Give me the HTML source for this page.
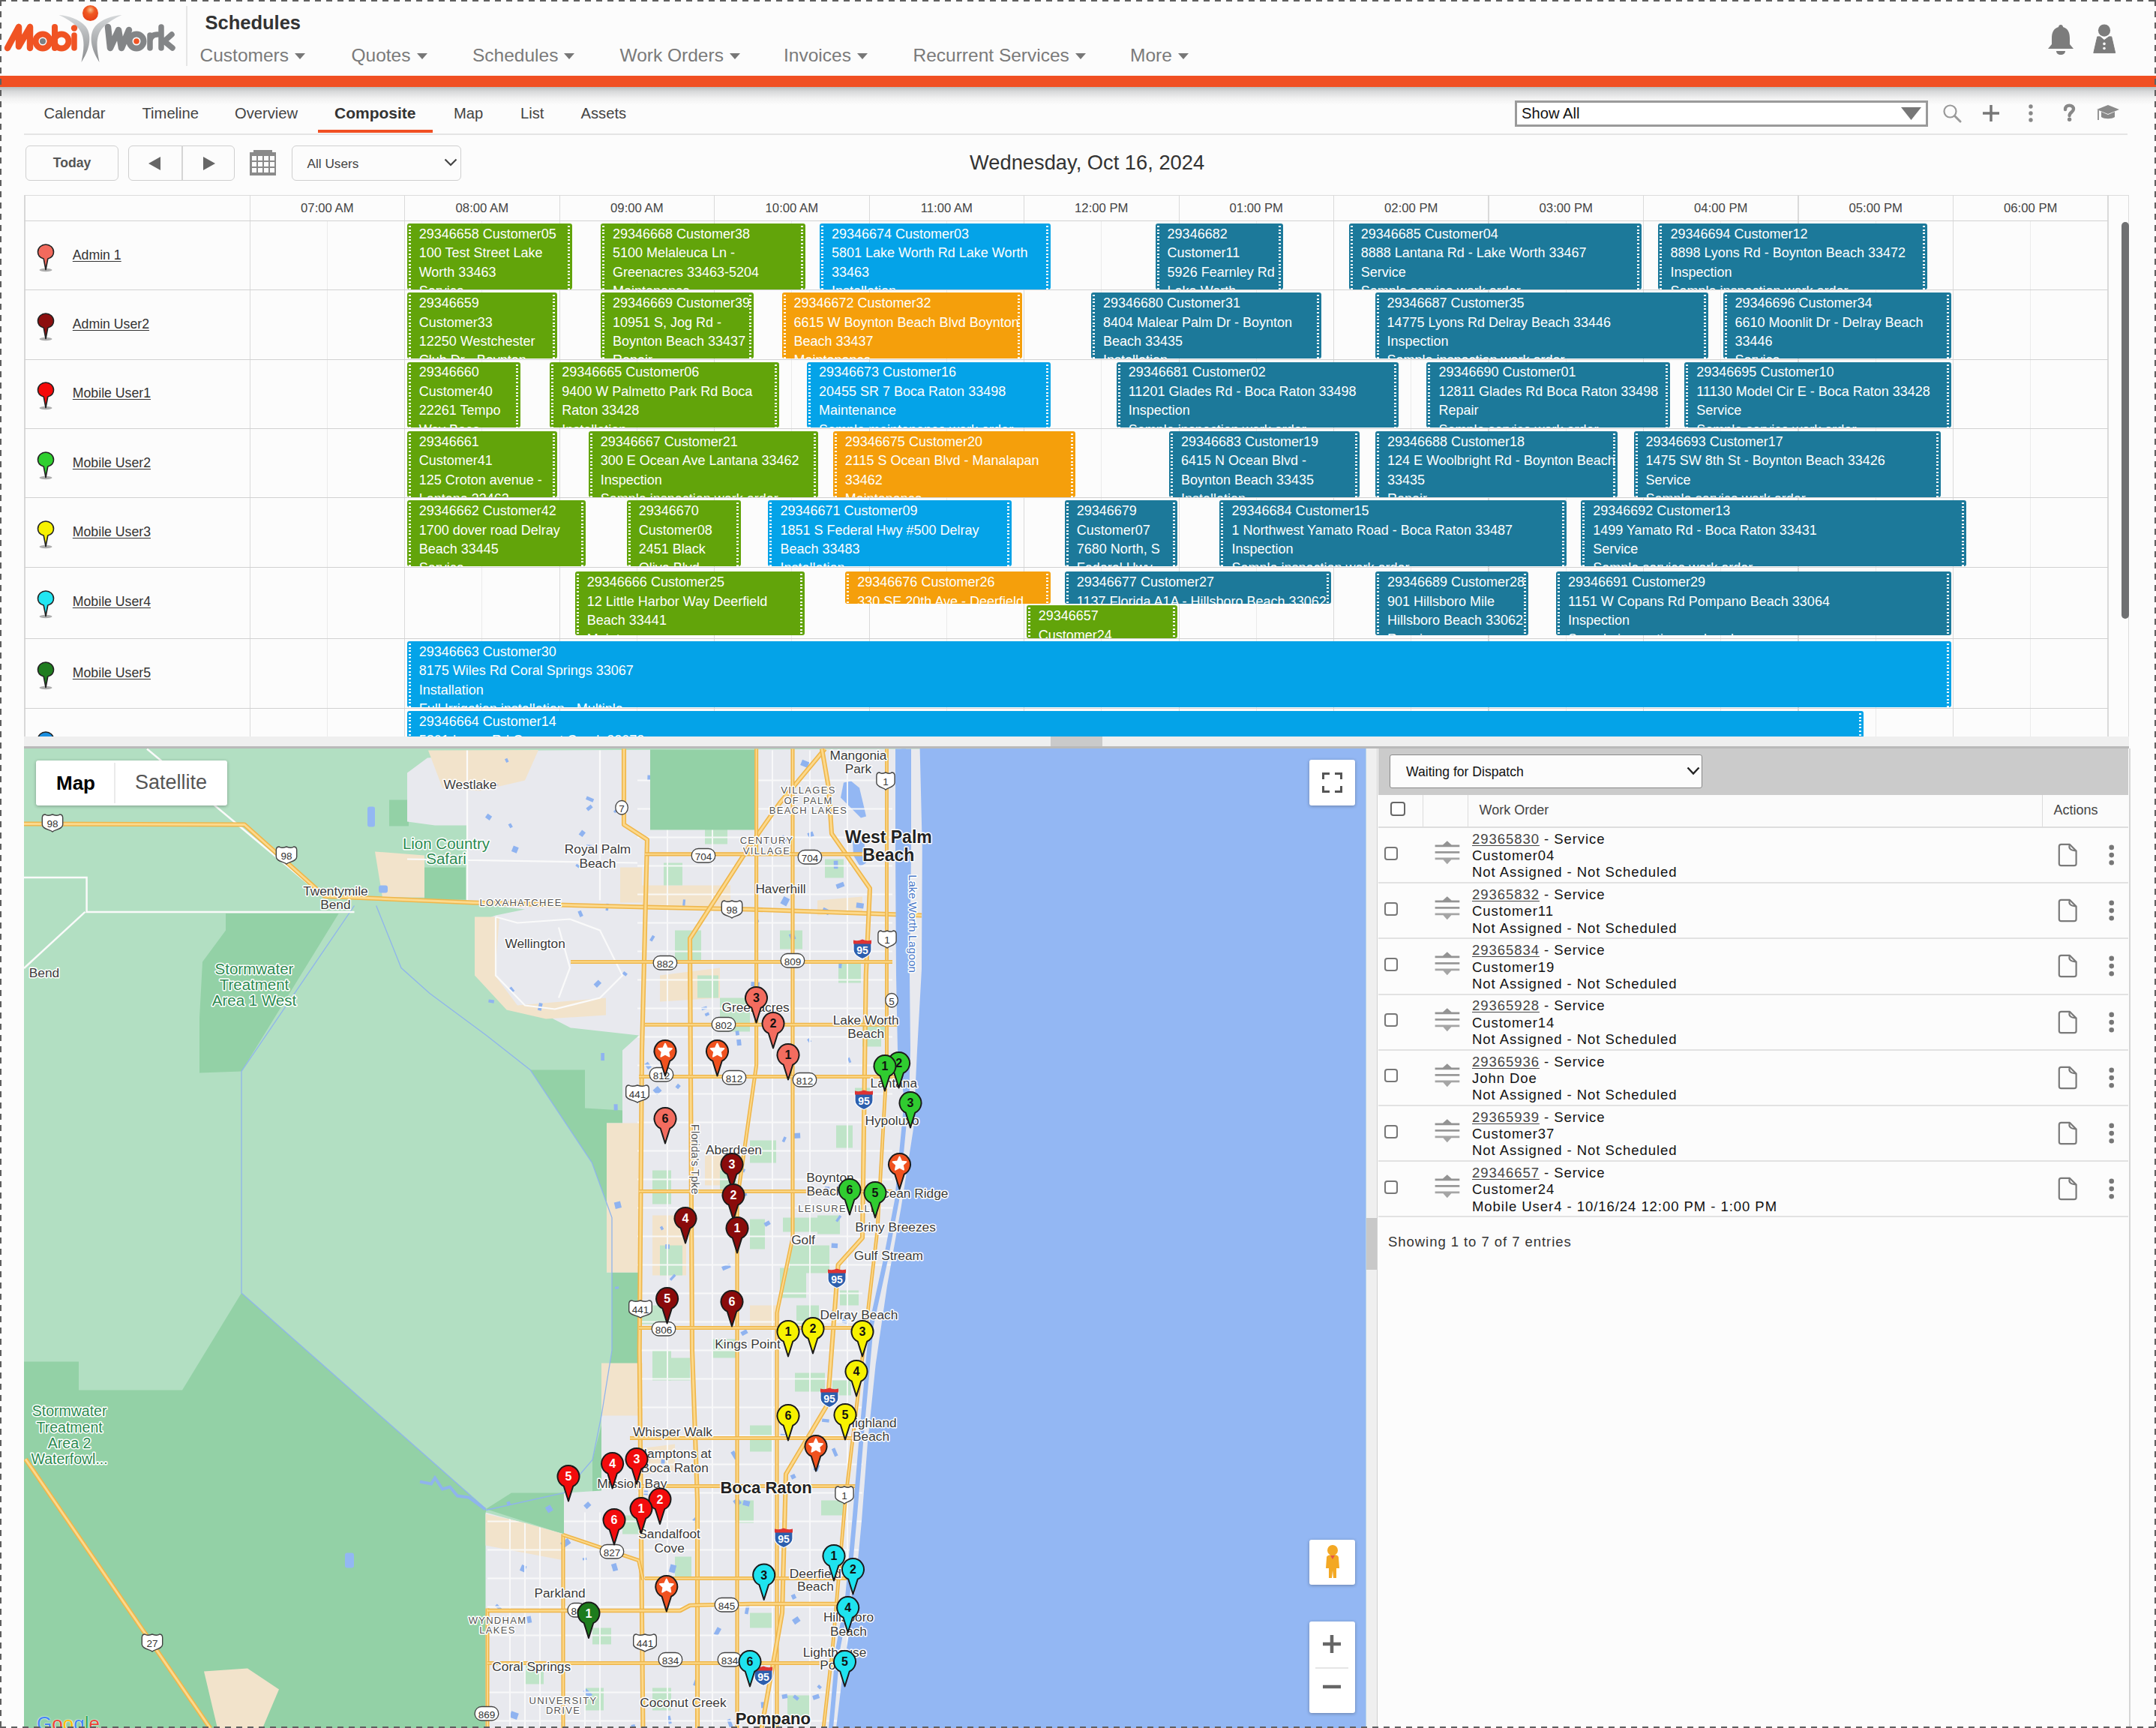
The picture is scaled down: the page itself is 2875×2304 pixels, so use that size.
<!DOCTYPE html><html><head><meta charset="utf-8"><style>
html,body{margin:0;padding:0;}
body{width:2875px;height:2304px;position:relative;overflow:hidden;background:#fcfcfc;font-family:"Liberation Sans", sans-serif;}
.t{position:absolute;white-space:nowrap;}
.b{position:absolute;box-sizing:border-box;}
.ev{position:absolute;box-sizing:border-box;border-radius:3px;overflow:hidden;color:#fff;font-size:18px;line-height:25.4px;padding:1.8px 0 0 16px;white-space:nowrap;}
.ev:before,.ev:after{content:"";position:absolute;top:3px;bottom:0;width:3px;background:repeating-linear-gradient(to bottom,#fff 0,#fff 2px,transparent 2px,transparent 4.6px);opacity:.95}
.ev:before{left:2px}.ev:after{right:3px}
</style></head><body>

<svg style="position:absolute;left:0;top:0" width="250" height="95" viewBox="0 0 250 95">
<defs><linearGradient id="lg1" x1="0" y1="0" x2="0" y2="1"><stop offset="0" stop-color="#d5d8da"/><stop offset="1" stop-color="#8a8c8e"/></linearGradient>
<radialGradient id="ball" cx="0.5" cy="0.3" r="0.6"><stop offset="0" stop-color="#f8c08a"/><stop offset="0.45" stop-color="#f05a22"/><stop offset="1" stop-color="#e8451a"/></radialGradient></defs>
<path d="M78.5,20 C92,21 106,26 114,35 C119,41 120.5,50 118.5,60 C116.5,70 112,77 108.5,83 C110,75 111.5,68 111.5,60 C111.5,50 109,42 103,36 C96,29 88,24 78.5,20 Z" fill="url(#lg1)"/>
<path d="M162.5,20 C149,21 135,26 127,35 C122,41 120.5,50 122.5,60 C124.5,70 129,77 132.5,83 C131,75 129.5,68 129.5,60 C129.5,50 132,42 138,36 C145,29 153,24 162.5,20 Z" fill="url(#lg1)"/>
<circle cx="120.5" cy="17.5" r="10.5" fill="url(#ball)"/>
<path d="M10 64 L25 36 M25 36 L25 62 M25 62 L40 36 M40 36 L40 64" stroke="#f05323" stroke-width="8.5" stroke-linecap="round" stroke-linejoin="round" fill="none"/>
<circle cx="57" cy="55" r="9.5" fill="none" stroke="#f05323" stroke-width="8"/>
<circle cx="57" cy="55" r="4" fill="#7d7f82"/>
<path d="M73 36 L73 64" stroke="#f05323" stroke-width="8" stroke-linecap="round"/>
<circle cx="82" cy="55" r="9.5" fill="none" stroke="#f05323" stroke-width="8"/>
<path d="M99 47 L99 64" stroke="#f05323" stroke-width="7.5" stroke-linecap="round"/>
<circle cx="99" cy="37.5" r="4.2" fill="#f05323"/>
<path d="M144 36 L147 64 L158 40 L162 64 L172 40" stroke="#838587" stroke-width="8.5" stroke-linecap="round" stroke-linejoin="round" fill="none"/>
<circle cx="182" cy="55" r="9.5" fill="none" stroke="#838587" stroke-width="8"/>
<circle cx="182" cy="55" r="3.8" fill="#f05323"/>
<path d="M200 47 L200 64 M200 54 C201 48 205 46 210 46" stroke="#838587" stroke-width="7.5" stroke-linecap="round" fill="none"/>
<path d="M215 36 L215 64 M229 46 L219 55 L230 64" stroke="#838587" stroke-width="7.5" stroke-linecap="round" stroke-linejoin="round" fill="none"/>
</svg>
<div class="b" style="left:248.0px;top:8.0px;width:2.0px;height:80.0px;background:#e6e6e6"></div>
<div class="t " style="left:273.5px;top:17.9px;font-size:25.5px;line-height:25.5px;color:#333;font-weight:bold;">Schedules</div>
<div class="t " style="left:266.5px;top:61.8px;font-size:24.5px;line-height:24.5px;color:#7a7a7a;font-weight:normal;">Customers</div>
<svg style="position:absolute;left:392.9375px;top:71px" width="14" height="8"><path d="M0 0H14L7 8Z" fill="#777"/></svg>
<div class="t " style="left:468.5px;top:61.8px;font-size:24.5px;line-height:24.5px;color:#7a7a7a;font-weight:normal;">Quotes</div>
<svg style="position:absolute;left:555.5px;top:71px" width="14" height="8"><path d="M0 0H14L7 8Z" fill="#777"/></svg>
<div class="t " style="left:630.0px;top:61.8px;font-size:24.5px;line-height:24.5px;color:#7a7a7a;font-weight:normal;">Schedules</div>
<svg style="position:absolute;left:752.40625px;top:71px" width="14" height="8"><path d="M0 0H14L7 8Z" fill="#777"/></svg>
<div class="t " style="left:826.5px;top:61.8px;font-size:24.5px;line-height:24.5px;color:#7a7a7a;font-weight:normal;">Work Orders</div>
<svg style="position:absolute;left:972.90625px;top:71px" width="14" height="8"><path d="M0 0H14L7 8Z" fill="#777"/></svg>
<div class="t " style="left:1045.0px;top:61.8px;font-size:24.5px;line-height:24.5px;color:#7a7a7a;font-weight:normal;">Invoices</div>
<svg style="position:absolute;left:1142.875px;top:71px" width="14" height="8"><path d="M0 0H14L7 8Z" fill="#777"/></svg>
<div class="t " style="left:1217.5px;top:61.8px;font-size:24.5px;line-height:24.5px;color:#7a7a7a;font-weight:normal;">Recurrent Services</div>
<svg style="position:absolute;left:1433.8125px;top:71px" width="14" height="8"><path d="M0 0H14L7 8Z" fill="#777"/></svg>
<div class="t " style="left:1507.0px;top:61.8px;font-size:24.5px;line-height:24.5px;color:#7a7a7a;font-weight:normal;">More</div>
<svg style="position:absolute;left:1570.8125px;top:71px" width="14" height="8"><path d="M0 0H14L7 8Z" fill="#777"/></svg>
<svg style="position:absolute;left:2728px;top:31px" width="40" height="44" viewBox="0 0 40 44">
<path d="M20 2 C22 2 23 3.5 23 5 C30 7 32 13 32 20 L32 28 L37 34 L3 34 L8 28 L8 20 C8 13 10 7 17 5 C17 3.5 18 2 20 2Z" fill="#7c7c7c"/>
<path d="M14 37 H26 C26 40 23.5 42 20 42 C16.5 42 14 40 14 37Z" fill="#7c7c7c"/></svg>
<svg style="position:absolute;left:2788px;top:31px" width="38" height="44" viewBox="0 0 38 44">
<circle cx="18" cy="9.6" r="8.1" fill="#7c7c7c"/>
<polygon points="8.8,17.9 12.4,17.9 18,22.6 24.2,17.9 27.7,17.9 32.7,39.6 3.8,39.6" fill="#7c7c7c" stroke="#7c7c7c" stroke-width="1" stroke-linejoin="round"/>
<circle cx="18" cy="27.4" r="1.8" fill="#fcfcfc"/><circle cx="18" cy="33.5" r="1.8" fill="#fcfcfc"/></svg>
<div class="b" style="left:0.0px;top:100.5px;width:2875.0px;height:15.0px;background:#f04f23"></div>
<div class="b" style="left:0.0px;top:115.5px;width:2875.0px;height:24.5px;background:linear-gradient(to bottom,#b9bcbd 0%,#d8d9da 25%,#f2f2f2 65%,#fcfcfc 100%)"></div>
<div class="t " style="left:58.5px;top:140.7px;font-size:20.2px;line-height:20.2px;color:#444;font-weight:normal;">Calendar</div>
<div class="t " style="left:189.5px;top:140.7px;font-size:20.2px;line-height:20.2px;color:#444;font-weight:normal;">Timeline</div>
<div class="t " style="left:313.0px;top:140.7px;font-size:20.2px;line-height:20.2px;color:#444;font-weight:normal;">Overview</div>
<div class="t " style="left:446.0px;top:140.0px;font-size:21px;line-height:21px;color:#333;font-weight:bold;">Composite</div>
<div class="t " style="left:605.0px;top:140.7px;font-size:20.2px;line-height:20.2px;color:#444;font-weight:normal;">Map</div>
<div class="t " style="left:694.0px;top:140.7px;font-size:20.2px;line-height:20.2px;color:#444;font-weight:normal;">List</div>
<div class="t " style="left:774.5px;top:140.7px;font-size:20.2px;line-height:20.2px;color:#444;font-weight:normal;">Assets</div>
<div class="b" style="left:31.5px;top:178.3px;width:2805.5px;height:1.5px;background:#e4e4e4"></div>
<div class="b" style="left:424.0px;top:173.0px;width:152.5px;height:4.0px;background:#f04f23"></div>
<div class="b" style="left:2019.5px;top:133.5px;width:551.5px;height:35.0px;border:3px solid #9a9a9a;background:#fff"></div>
<div class="t " style="left:2029.0px;top:140.9px;font-size:20.2px;line-height:20.2px;color:#111;font-weight:normal;">Show All</div>
<svg style="position:absolute;left:2535px;top:143px" width="27" height="17"><path d="M0 0H27L13.5 17Z" fill="#777"/></svg>
<svg style="position:absolute;left:2590px;top:138px" width="240" height="26" viewBox="0 0 240 26">
<circle cx="10.5" cy="10.5" r="8" fill="none" stroke="#9a9a9a" stroke-width="2.2"/><path d="M16.5 16.5 L24 24" stroke="#9a9a9a" stroke-width="3" stroke-linecap="round"/>
<path d="M65 2 V24 M54 13 H76" stroke="#777" stroke-width="3.5"/>
<circle cx="118" cy="4" r="2.7" fill="#888"/><circle cx="118" cy="13" r="2.7" fill="#888"/><circle cx="118" cy="22" r="2.7" fill="#888"/>
<path d="M164 8 C164 4.2 166.3 2.6 169.4 2.6 C172.8 2.6 175 4.6 175 7.6 C175 11.2 169.6 11.8 169.6 16" fill="none" stroke="#888" stroke-width="4.4" stroke-linecap="round"/><circle cx="169.6" cy="21.2" r="2.7" fill="#888"/>
<path d="M206 8 L221 2 L236 8 L221 14Z" fill="#8a8a8a"/><path d="M212 11 V18 C216 21 226 21 230 18 V11 L221 15Z" fill="#8a8a8a"/><path d="M208 9 V22" stroke="#8a8a8a" stroke-width="1.8"/>
</svg>
<div class="b" style="left:34.0px;top:193.7px;width:123.5px;height:46.9px;border:1.5px solid #cfcfcf;border-radius:6px;background:#fcfcfc"></div>
<div class="t " style="left:70.8px;top:209.4px;font-size:17.6px;line-height:17.6px;color:#555;font-weight:bold;">Today</div>
<div class="b" style="left:171.4px;top:193.7px;width:142.1px;height:46.9px;border:1.5px solid #cfcfcf;border-radius:6px;background:#fcfcfc"></div>
<div class="b" style="left:242.0px;top:194.0px;width:1.5px;height:46.3px;background:#d5d5d5"></div>
<svg style="position:absolute;left:198px;top:209px" width="90" height="18"><path d="M0 9L16 0V18Z" fill="#666"/><path d="M73 0L89 9L73 18Z" fill="#666"/></svg>
<svg style="position:absolute;left:333px;top:200px" width="36" height="34" viewBox="0 0 36 34">
<rect x="0" y="3" width="35" height="31" fill="#8a8a8a"/>
<rect x="5" y="0" width="25" height="5" fill="#8a8a8a"/>
<rect x="3" y="8" width="6" height="6" fill="#fcfcfc"/><rect x="11" y="8" width="6" height="6" fill="#fcfcfc"/><rect x="19" y="8" width="6" height="6" fill="#fcfcfc"/><rect x="27" y="8" width="6" height="6" fill="#fcfcfc"/><rect x="3" y="16" width="6" height="6" fill="#fcfcfc"/><rect x="11" y="16" width="6" height="6" fill="#fcfcfc"/><rect x="19" y="16" width="6" height="6" fill="#fcfcfc"/><rect x="27" y="16" width="6" height="6" fill="#fcfcfc"/><rect x="3" y="24" width="6" height="6" fill="#fcfcfc"/><rect x="11" y="24" width="6" height="6" fill="#fcfcfc"/><rect x="19" y="24" width="6" height="6" fill="#fcfcfc"/><rect x="27" y="24" width="6" height="6" fill="#fcfcfc"/></svg>
<div class="b" style="left:388.7px;top:193.8px;width:226.3px;height:47.2px;border:1.5px solid #cfcfcf;border-radius:6px;background:#fcfcfc"></div>
<div class="t " style="left:409.5px;top:210.4px;font-size:17.2px;line-height:17.2px;color:#444;font-weight:normal;">All Users</div>
<svg style="position:absolute;left:592px;top:211px" width="18" height="11"><path d="M1.5 1.5L9 9L16.5 1.5" fill="none" stroke="#444" stroke-width="2.2"/></svg>
<div class="t " style="left:1293.0px;top:202.9px;font-size:27.3px;line-height:27.3px;color:#333;font-weight:normal;">Wednesday, Oct 16, 2024</div>
<div class="b" style="left:32.0px;top:260.3px;width:2807.0px;height:736.7px;border:1px solid #dcdcdc;border-bottom:none;background:#fcfcfc"></div>
<div class="b" style="left:435.8px;top:295.0px;width:1.0px;height:687.0px;background:#ebebeb"></div>
<div class="b" style="left:642.3px;top:295.0px;width:1.0px;height:687.0px;background:#ebebeb"></div>
<div class="b" style="left:848.8px;top:295.0px;width:1.0px;height:687.0px;background:#ebebeb"></div>
<div class="b" style="left:1055.3px;top:295.0px;width:1.0px;height:687.0px;background:#ebebeb"></div>
<div class="b" style="left:1261.8px;top:295.0px;width:1.0px;height:687.0px;background:#ebebeb"></div>
<div class="b" style="left:1468.3px;top:295.0px;width:1.0px;height:687.0px;background:#ebebeb"></div>
<div class="b" style="left:1674.8px;top:295.0px;width:1.0px;height:687.0px;background:#ebebeb"></div>
<div class="b" style="left:1881.3px;top:295.0px;width:1.0px;height:687.0px;background:#ebebeb"></div>
<div class="b" style="left:2087.8px;top:295.0px;width:1.0px;height:687.0px;background:#ebebeb"></div>
<div class="b" style="left:2294.3px;top:295.0px;width:1.0px;height:687.0px;background:#ebebeb"></div>
<div class="b" style="left:2500.8px;top:295.0px;width:1.0px;height:687.0px;background:#ebebeb"></div>
<div class="b" style="left:2707.3px;top:295.0px;width:1.0px;height:687.0px;background:#ebebeb"></div>
<div class="b" style="left:332.5px;top:260.3px;width:1.3px;height:721.7px;background:#dadada"></div>
<div class="b" style="left:539.0px;top:260.3px;width:1.3px;height:721.7px;background:#dadada"></div>
<div class="b" style="left:745.5px;top:260.3px;width:1.3px;height:721.7px;background:#dadada"></div>
<div class="b" style="left:952.0px;top:260.3px;width:1.3px;height:721.7px;background:#dadada"></div>
<div class="b" style="left:1158.5px;top:260.3px;width:1.3px;height:721.7px;background:#dadada"></div>
<div class="b" style="left:1365.0px;top:260.3px;width:1.3px;height:721.7px;background:#dadada"></div>
<div class="b" style="left:1571.5px;top:260.3px;width:1.3px;height:721.7px;background:#dadada"></div>
<div class="b" style="left:1777.9px;top:260.3px;width:1.3px;height:721.7px;background:#dadada"></div>
<div class="b" style="left:1984.4px;top:260.3px;width:1.3px;height:721.7px;background:#dadada"></div>
<div class="b" style="left:2190.9px;top:260.3px;width:1.3px;height:721.7px;background:#dadada"></div>
<div class="b" style="left:2397.4px;top:260.3px;width:1.3px;height:721.7px;background:#dadada"></div>
<div class="b" style="left:2603.9px;top:260.3px;width:1.3px;height:721.7px;background:#dadada"></div>
<div class="b" style="left:2810.4px;top:260.3px;width:1.3px;height:721.7px;background:#dadada"></div>
<div class="b" style="left:32.0px;top:260.3px;width:1.5px;height:721.7px;background:#d8d8d8"></div>
<div class="b" style="left:32.0px;top:294.0px;width:2779.0px;height:1.0px;background:#d2d2d2"></div>
<div class="b" style="left:32.0px;top:386.3px;width:2779.0px;height:1.0px;background:#d2d2d2"></div>
<div class="b" style="left:32.0px;top:478.5px;width:2779.0px;height:1.0px;background:#d2d2d2"></div>
<div class="b" style="left:32.0px;top:571.0px;width:2779.0px;height:1.0px;background:#d2d2d2"></div>
<div class="b" style="left:32.0px;top:663.4px;width:2779.0px;height:1.0px;background:#d2d2d2"></div>
<div class="b" style="left:32.0px;top:756.3px;width:2779.0px;height:1.0px;background:#d2d2d2"></div>
<div class="b" style="left:32.0px;top:851.0px;width:2779.0px;height:1.0px;background:#d2d2d2"></div>
<div class="b" style="left:32.0px;top:944.0px;width:2779.0px;height:1.0px;background:#d2d2d2"></div>
<div class="t " style="left:401.1px;top:270.4px;font-size:16.7px;line-height:16.7px;color:#444;font-weight:normal;">07:00 AM</div>
<div class="t " style="left:607.6px;top:270.4px;font-size:16.7px;line-height:16.7px;color:#444;font-weight:normal;">08:00 AM</div>
<div class="t " style="left:814.1px;top:270.4px;font-size:16.7px;line-height:16.7px;color:#444;font-weight:normal;">09:00 AM</div>
<div class="t " style="left:1020.6px;top:270.4px;font-size:16.7px;line-height:16.7px;color:#444;font-weight:normal;">10:00 AM</div>
<div class="t " style="left:1227.7px;top:270.4px;font-size:16.7px;line-height:16.7px;color:#444;font-weight:normal;">11:00 AM</div>
<div class="t " style="left:1433.1px;top:270.4px;font-size:16.7px;line-height:16.7px;color:#444;font-weight:normal;">12:00 PM</div>
<div class="t " style="left:1639.6px;top:270.4px;font-size:16.7px;line-height:16.7px;color:#444;font-weight:normal;">01:00 PM</div>
<div class="t " style="left:1846.1px;top:270.4px;font-size:16.7px;line-height:16.7px;color:#444;font-weight:normal;">02:00 PM</div>
<div class="t " style="left:2052.6px;top:270.4px;font-size:16.7px;line-height:16.7px;color:#444;font-weight:normal;">03:00 PM</div>
<div class="t " style="left:2259.1px;top:270.4px;font-size:16.7px;line-height:16.7px;color:#444;font-weight:normal;">04:00 PM</div>
<div class="t " style="left:2465.5px;top:270.4px;font-size:16.7px;line-height:16.7px;color:#444;font-weight:normal;">05:00 PM</div>
<div class="t " style="left:2672.0px;top:270.4px;font-size:16.7px;line-height:16.7px;color:#444;font-weight:normal;">06:00 PM</div>
<svg style="position:absolute;left:46.6px;top:322.7px" width="28" height="40" viewBox="0 0 28 40">
<ellipse cx="14" cy="37" rx="8.5" ry="2.2" fill="#9a9a9a" opacity=".8"/>
<path d="M14 36.5 L11.2 22 C5.5 20.5 3.5 16.5 3.5 13 C3.5 7 8.5 3 14 3 C19.5 3 24.5 7 24.5 13 C24.5 16.5 22.5 20.5 16.8 22 Z" fill="#f26a5d" stroke="#222" stroke-width="1.6" stroke-linejoin="round"/></svg>
<div class="t " style="left:96.8px;top:331.8px;font-size:17.7px;line-height:17.7px;color:#333;font-weight:normal;text-decoration:underline;text-underline-offset:2px;text-decoration-thickness:1.3px">Admin 1</div>
<svg style="position:absolute;left:46.6px;top:415.0px" width="28" height="40" viewBox="0 0 28 40">
<ellipse cx="14" cy="37" rx="8.5" ry="2.2" fill="#9a9a9a" opacity=".8"/>
<path d="M14 36.5 L11.2 22 C5.5 20.5 3.5 16.5 3.5 13 C3.5 7 8.5 3 14 3 C19.5 3 24.5 7 24.5 13 C24.5 16.5 22.5 20.5 16.8 22 Z" fill="#8c0f0f" stroke="#222" stroke-width="1.6" stroke-linejoin="round"/></svg>
<div class="t " style="left:96.8px;top:424.1px;font-size:17.7px;line-height:17.7px;color:#333;font-weight:normal;text-decoration:underline;text-underline-offset:2px;text-decoration-thickness:1.3px">Admin User2</div>
<svg style="position:absolute;left:46.6px;top:507.2px" width="28" height="40" viewBox="0 0 28 40">
<ellipse cx="14" cy="37" rx="8.5" ry="2.2" fill="#9a9a9a" opacity=".8"/>
<path d="M14 36.5 L11.2 22 C5.5 20.5 3.5 16.5 3.5 13 C3.5 7 8.5 3 14 3 C19.5 3 24.5 7 24.5 13 C24.5 16.5 22.5 20.5 16.8 22 Z" fill="#f50a0a" stroke="#222" stroke-width="1.6" stroke-linejoin="round"/></svg>
<div class="t " style="left:96.8px;top:516.3px;font-size:17.7px;line-height:17.7px;color:#333;font-weight:normal;text-decoration:underline;text-underline-offset:2px;text-decoration-thickness:1.3px">Mobile User1</div>
<svg style="position:absolute;left:46.6px;top:599.7px" width="28" height="40" viewBox="0 0 28 40">
<ellipse cx="14" cy="37" rx="8.5" ry="2.2" fill="#9a9a9a" opacity=".8"/>
<path d="M14 36.5 L11.2 22 C5.5 20.5 3.5 16.5 3.5 13 C3.5 7 8.5 3 14 3 C19.5 3 24.5 7 24.5 13 C24.5 16.5 22.5 20.5 16.8 22 Z" fill="#2fcf2f" stroke="#222" stroke-width="1.6" stroke-linejoin="round"/></svg>
<div class="t " style="left:96.8px;top:608.8px;font-size:17.7px;line-height:17.7px;color:#333;font-weight:normal;text-decoration:underline;text-underline-offset:2px;text-decoration-thickness:1.3px">Mobile User2</div>
<svg style="position:absolute;left:46.6px;top:692.1px" width="28" height="40" viewBox="0 0 28 40">
<ellipse cx="14" cy="37" rx="8.5" ry="2.2" fill="#9a9a9a" opacity=".8"/>
<path d="M14 36.5 L11.2 22 C5.5 20.5 3.5 16.5 3.5 13 C3.5 7 8.5 3 14 3 C19.5 3 24.5 7 24.5 13 C24.5 16.5 22.5 20.5 16.8 22 Z" fill="#f7f200" stroke="#222" stroke-width="1.6" stroke-linejoin="round"/></svg>
<div class="t " style="left:96.8px;top:701.2px;font-size:17.7px;line-height:17.7px;color:#333;font-weight:normal;text-decoration:underline;text-underline-offset:2px;text-decoration-thickness:1.3px">Mobile User3</div>
<svg style="position:absolute;left:46.6px;top:785.0px" width="28" height="40" viewBox="0 0 28 40">
<ellipse cx="14" cy="37" rx="8.5" ry="2.2" fill="#9a9a9a" opacity=".8"/>
<path d="M14 36.5 L11.2 22 C5.5 20.5 3.5 16.5 3.5 13 C3.5 7 8.5 3 14 3 C19.5 3 24.5 7 24.5 13 C24.5 16.5 22.5 20.5 16.8 22 Z" fill="#22e6f2" stroke="#222" stroke-width="1.6" stroke-linejoin="round"/></svg>
<div class="t " style="left:96.8px;top:794.1px;font-size:17.7px;line-height:17.7px;color:#333;font-weight:normal;text-decoration:underline;text-underline-offset:2px;text-decoration-thickness:1.3px">Mobile User4</div>
<svg style="position:absolute;left:46.6px;top:879.7px" width="28" height="40" viewBox="0 0 28 40">
<ellipse cx="14" cy="37" rx="8.5" ry="2.2" fill="#9a9a9a" opacity=".8"/>
<path d="M14 36.5 L11.2 22 C5.5 20.5 3.5 16.5 3.5 13 C3.5 7 8.5 3 14 3 C19.5 3 24.5 7 24.5 13 C24.5 16.5 22.5 20.5 16.8 22 Z" fill="#1f7d1f" stroke="#222" stroke-width="1.6" stroke-linejoin="round"/></svg>
<div class="t " style="left:96.8px;top:888.8px;font-size:17.7px;line-height:17.7px;color:#333;font-weight:normal;text-decoration:underline;text-underline-offset:2px;text-decoration-thickness:1.3px">Mobile User5</div>
<svg style="position:absolute;left:46.6px;top:972.7px" width="28" height="40" viewBox="0 0 28 40">
<ellipse cx="14" cy="37" rx="8.5" ry="2.2" fill="#9a9a9a" opacity=".8"/>
<path d="M14 36.5 L11.2 22 C5.5 20.5 3.5 16.5 3.5 13 C3.5 7 8.5 3 14 3 C19.5 3 24.5 7 24.5 13 C24.5 16.5 22.5 20.5 16.8 22 Z" fill="#1a8fe0" stroke="#222" stroke-width="1.6" stroke-linejoin="round"/></svg>
<div style="position:absolute;left:0;top:0;width:2875px;height:982px;overflow:hidden">
<div class="ev" style="left:542.7px;top:298.0px;width:220.6px;height:87.5px;background:#62a40a">29346658 Customer05<br>100 Test Street Lake<br>Worth 33463<br>Service</div>
<div class="ev" style="left:801.0px;top:298.0px;width:272.7px;height:87.5px;background:#62a40a">29346668 Customer38<br>5100 Melaleuca Ln -<br>Greenacres 33463-5204<br>Maintenance</div>
<div class="ev" style="left:1093.0px;top:298.0px;width:307.7px;height:87.5px;background:#04a3e8">29346674 Customer03<br>5801 Lake Worth Rd Lake Worth<br>33463<br>Installation</div>
<div class="ev" style="left:1540.6px;top:298.0px;width:170.4px;height:87.5px;background:#1c799a">29346682<br>Customer11<br>5926 Fearnley Rd<br>Lake Worth</div>
<div class="ev" style="left:1798.7px;top:298.0px;width:390.6px;height:87.5px;background:#1c799a">29346685 Customer04<br>8888 Lantana Rd - Lake Worth 33467<br>Service<br>Sample service work order</div>
<div class="ev" style="left:2211.4px;top:298.0px;width:358.4px;height:87.5px;background:#1c799a">29346694 Customer12<br>8898 Lyons Rd - Boynton Beach 33472<br>Inspection<br>Sample inspection work order</div>
<div class="ev" style="left:542.7px;top:390.3px;width:200.6px;height:87.4px;background:#62a40a">29346659<br>Customer33<br>12250 Westchester<br>Club Dr - Boynton</div>
<div class="ev" style="left:801.0px;top:390.3px;width:204.0px;height:87.4px;background:#62a40a">29346669 Customer39<br>10951 S, Jog Rd -<br>Boynton Beach 33437<br>Repair</div>
<div class="ev" style="left:1042.5px;top:390.3px;width:320.2px;height:87.4px;background:#f59f0b">29346672 Customer32<br>6615 W Boynton Beach Blvd Boynton<br>Beach 33437<br>Maintenance</div>
<div class="ev" style="left:1455.0px;top:390.3px;width:307.0px;height:87.4px;background:#1c799a">29346680 Customer31<br>8404 Malear Palm Dr - Boynton<br>Beach 33435<br>Installation</div>
<div class="ev" style="left:1833.5px;top:390.3px;width:444.9px;height:87.4px;background:#1c799a">29346687 Customer35<br>14775 Lyons Rd Delray Beach 33446<br>Inspection<br>Sample inspection work order</div>
<div class="ev" style="left:2297.5px;top:390.3px;width:304.4px;height:87.4px;background:#1c799a">29346696 Customer34<br>6610 Moonlit Dr - Delray Beach<br>33446<br>Service</div>
<div class="ev" style="left:542.7px;top:482.5px;width:151.7px;height:87.7px;background:#62a40a">29346660<br>Customer40<br>22261 Tempo<br>Way Boca</div>
<div class="ev" style="left:733.2px;top:482.5px;width:305.6px;height:87.7px;background:#62a40a">29346665 Customer06<br>9400 W Palmetto Park Rd Boca<br>Raton 33428<br>Installation</div>
<div class="ev" style="left:1076.0px;top:482.5px;width:325.0px;height:87.7px;background:#04a3e8">29346673 Customer16<br>20455 SR 7 Boca Raton 33498<br>Maintenance<br>Sample maintenance work order</div>
<div class="ev" style="left:1488.7px;top:482.5px;width:376.7px;height:87.7px;background:#1c799a">29346681 Customer02<br>11201 Glades Rd - Boca Raton 33498<br>Inspection<br>Sample inspection work order</div>
<div class="ev" style="left:1902.4px;top:482.5px;width:324.9px;height:87.7px;background:#1c799a">29346690 Customer01<br>12811 Glades Rd Boca Raton 33498<br>Repair<br>Sample service work order</div>
<div class="ev" style="left:2246.3px;top:482.5px;width:355.6px;height:87.7px;background:#1c799a">29346695 Customer10<br>11130 Model Cir E - Boca Raton 33428<br>Service<br>Sample service work order</div>
<div class="ev" style="left:542.7px;top:575.0px;width:200.6px;height:87.6px;background:#62a40a">29346661<br>Customer41<br>125 Croton avenue -<br>Lantana 33462</div>
<div class="ev" style="left:784.7px;top:575.0px;width:306.3px;height:87.6px;background:#62a40a">29346667 Customer21<br>300 E Ocean Ave Lantana 33462<br>Inspection<br>Sample inspection work order</div>
<div class="ev" style="left:1110.8px;top:575.0px;width:322.9px;height:87.6px;background:#f59f0b">29346675 Customer20<br>2115 S Ocean Blvd - Manalapan<br>33462<br>Maintenance</div>
<div class="ev" style="left:1558.9px;top:575.0px;width:254.1px;height:87.6px;background:#1c799a">29346683 Customer19<br>6415 N Ocean Blvd -<br>Boynton Beach 33435<br>Installation</div>
<div class="ev" style="left:1834.0px;top:575.0px;width:322.7px;height:87.6px;background:#1c799a">29346688 Customer18<br>124 E Woolbright Rd - Boynton Beach<br>33435<br>Repair</div>
<div class="ev" style="left:2178.6px;top:575.0px;width:409.1px;height:87.6px;background:#1c799a">29346693 Customer17<br>1475 SW 8th St - Boynton Beach 33426<br>Service<br>Sample service work order</div>
<div class="ev" style="left:542.7px;top:667.4px;width:238.0px;height:88.1px;background:#62a40a">29346662 Customer42<br>1700 dover road Delray<br>Beach 33445<br>Service</div>
<div class="ev" style="left:835.7px;top:667.4px;width:152.1px;height:88.1px;background:#62a40a">29346670<br>Customer08<br>2451 Black<br>Olive Blvd</div>
<div class="ev" style="left:1024.4px;top:667.4px;width:324.9px;height:88.1px;background:#04a3e8">29346671 Customer09<br>1851 S Federal Hwy #500 Delray<br>Beach 33483<br>Installation</div>
<div class="ev" style="left:1419.8px;top:667.4px;width:150.0px;height:88.1px;background:#1c799a">29346679<br>Customer07<br>7680 North, S<br>Federal Hwy</div>
<div class="ev" style="left:1626.4px;top:667.4px;width:462.2px;height:88.1px;background:#1c799a">29346684 Customer15<br>1 Northwest Yamato Road - Boca Raton 33487<br>Inspection<br>Sample inspection work order</div>
<div class="ev" style="left:2108.2px;top:667.4px;width:513.5px;height:88.1px;background:#1c799a">29346692 Customer13<br>1499 Yamato Rd - Boca Raton 33431<br>Service<br>Sample service work order</div>
<div class="ev" style="left:766.8px;top:762.3px;width:306.0px;height:84.5px;background:#62a40a">29346666 Customer25<br>12 Little Harbor Way Deerfield<br>Beach 33441<br>Maintenance</div>
<div class="ev" style="left:1127.3px;top:762.3px;width:273.4px;height:42.5px;background:#f59f0b">29346676 Customer26<br>330 SE 20th Ave - Deerfield</div>
<div class="ev" style="left:1368.8px;top:807.3px;width:201.0px;height:43.5px;background:#62a40a">29346657<br>Customer24</div>
<div class="ev" style="left:1419.8px;top:762.3px;width:355.2px;height:42.5px;background:#1c799a">29346677 Customer27<br>1137 Florida A1A - Hillsboro Beach 33062</div>
<div class="ev" style="left:1834.0px;top:762.3px;width:203.6px;height:84.5px;background:#1c799a">29346689 Customer28<br>901 Hillsboro Mile<br>Hillsboro Beach 33062<br>Repair</div>
<div class="ev" style="left:2075.0px;top:762.3px;width:527.3px;height:84.5px;background:#1c799a">29346691 Customer29<br>1151 W Copans Rd Pompano Beach 33064<br>Inspection<br>Sample inspection work order</div>
<div class="ev" style="left:542.7px;top:855.0px;width:2059.6px;height:88.2px;background:#04a3e8">29346663 Customer30<br>8175 Wiles Rd Coral Springs 33067<br>Installation<br>Full Irrigation installation - Multiple</div>
<div class="ev" style="left:542.7px;top:948.0px;width:1942.7px;height:88.2px;background:#04a3e8">29346664 Customer14<br>5801 Lyons Rd Coconut Creek 33073<br>Installation</div>
</div>
<div class="b" style="left:2829.0px;top:296.0px;width:9.5px;height:529.0px;background:#6f7072;border-radius:5px"></div>
<div class="b" style="left:32.0px;top:982.0px;width:2807.0px;height:13.0px;background:#efefef"></div>
<div class="b" style="left:1401.0px;top:982.0px;width:69.0px;height:13.0px;background:#cacaca"></div>
<div class="b" style="left:32.0px;top:995.0px;width:2807.0px;height:2.5px;background:#b9b9b9"></div>
<svg style="position:absolute;left:32px;top:997.5px" width="1789.5" height="1306.5" viewBox="0 0 1789.5 1306.5" font-family="Liberation Sans, sans-serif"><rect x="0" y="0" width="1789.5" height="1306.5" fill="#b2dfc2"/><polygon points="269.0,220.0 419.6,220.0 290.0,430.5 234.0,432.5 234.0,359.5 238.0,284.5 269.0,242.5" fill="#93d1a6"/><polygon points="0.0,817.5 73.0,817.5 73.0,855.5 211.0,855.5 290.0,726.0 616.0,1014.0 616.0,1306.5 0.0,1306.5" fill="#93d1a6"/><polygon points="616.0,1014.0 650.0,992.5 720.0,992.5 720.0,1047.5" fill="#93d1a6"/><polygon points="675.0,428.5 748.0,428.5 748.0,479.5 798.0,482.5 820.0,499.5 820.0,997.5 758.0,997.5 758.0,948.5 770.0,902.5 784.0,802.5 784.0,625.5 757.5,552.5" fill="#93d1a6"/><polygon points="487.0,68.5 513.0,68.5 513.0,103.5 487.0,103.5" fill="#93d1a6"/><polygon points="534.0,158.5 589.0,158.5 589.0,201.5 534.0,201.5" fill="#93d1a6"/><polygon points="8.0,922.5 28.0,922.5 28.0,937.5 8.0,937.5" fill="#93d1a6"/><defs><clipPath id="urbclip"><polygon points="511.0,32.5 538.0,12.5 688.0,2.5 1208.0,0.5 1208.0,1306.5 615.5,1306.5 615.5,1018.5 720.0,1047.5 720.0,992.5 770.0,989.5 770.0,889.5 820.0,872.5 820.0,698.5 777.0,698.5 777.0,499.5 798.0,499.5 798.0,402.5 820.0,382.5 729.0,372.5 696.0,355.5 643.6,343.5 601.0,300.5 610.0,229.5 629.0,222.5 668.0,214.5 591.0,205.5 591.0,102.5 548.0,102.5 511.0,97.5"/></clipPath></defs><polygon points="511.0,32.5 538.0,12.5 688.0,2.5 1208.0,0.5 1208.0,1306.5 615.5,1306.5 615.5,1018.5 720.0,1047.5 720.0,992.5 770.0,989.5 770.0,889.5 820.0,872.5 820.0,698.5 777.0,698.5 777.0,499.5 798.0,499.5 798.0,402.5 820.0,382.5 729.0,372.5 696.0,355.5 643.6,343.5 601.0,300.5 610.0,229.5 629.0,222.5 668.0,214.5 591.0,205.5 591.0,102.5 548.0,102.5 511.0,97.5" fill="#e8e9ee"/><polygon points="539.0,2.5 686.0,2.0 668.0,42.5 608.0,56.5 558.0,52.5" fill="#f2e3cb"/><polygon points="468.0,137.5 534.0,142.5 534.0,198.5 478.0,198.5" fill="#f2e3cb"/><polygon points="601.0,224.5 634.0,224.5 628.0,302.5 658.0,342.5 776.0,332.5 776.0,355.5 696.0,360.5 643.6,348.5 601.0,302.5" fill="#f2e3cb"/><polygon points="795.0,158.5 824.0,158.5 824.0,205.5 795.0,205.5" fill="#f2e3cb"/><polygon points="824.0,182.5 942.0,182.5 942.0,213.5 824.0,213.5" fill="#f2e3cb"/><polygon points="777.0,499.5 820.0,499.5 820.0,698.5 777.0,698.5" fill="#f2e3cb"/><polygon points="770.0,819.5 825.0,819.5 825.0,889.5 770.0,889.5" fill="#f2e3cb"/><polygon points="240.0,1230.5 298.0,1226.5 340.0,1254.5 318.0,1306.5 258.0,1306.5" fill="#f2e3cb"/><polygon points="615.5,1020.5 668.0,1032.5 720.0,1047.5 720.0,1082.5 615.5,1062.5" fill="#f2e3cb"/><polygon points="848.0,302.5 928.0,292.5 928.0,332.5 848.0,337.5" fill="#f2e3cb"/><polygon points="1058.0,202.5 1118.0,197.5 1118.0,217.5 1058.0,222.5" fill="#f2e3cb"/><polygon points="828.0,932.5 868.0,927.5 868.0,962.5 828.0,967.5" fill="#f2e3cb"/><polygon points="968.0,742.5 1008.0,742.5 1008.0,772.5 968.0,772.5" fill="#f2e3cb"/><polygon points="838.0,622.5 883.0,622.5 883.0,702.5 838.0,702.5" fill="#f2e3cb"/><polygon points="908.0,542.5 943.0,542.5 943.0,582.5 908.0,582.5" fill="#f2e3cb"/><rect x="1021" y="662.5" width="53" height="37" fill="#bfe4c8"/><rect x="1012" y="625.5" width="51" height="19" fill="#bfe4c8"/><rect x="968" y="627.5" width="20" height="40" fill="#bfe4c8"/><rect x="928" y="562.5" width="22" height="25" fill="#bfe4c8"/><rect x="818" y="742.5" width="40" height="25" fill="#bfe4c8"/><rect x="838" y="802.5" width="25" height="40" fill="#bfe4c8"/><rect x="1078" y="842.5" width="25" height="20" fill="#bfe4c8"/><rect x="908" y="92.5" width="30" height="35" fill="#bfe4c8"/><rect x="853" y="152.5" width="25" height="30" fill="#bfe4c8"/><rect x="868" y="242.5" width="35" height="40" fill="#bfe4c8"/><rect x="898" y="302.5" width="28" height="30" fill="#bfe4c8"/><rect x="928" y="332.5" width="40" height="45" fill="#bfe4c8"/><rect x="1008" y="242.5" width="30" height="25" fill="#bfe4c8"/><rect x="1068" y="147.5" width="25" height="25" fill="#bfe4c8"/><rect x="1086" y="282.5" width="30" height="30" fill="#bfe4c8"/><rect x="1118" y="362.5" width="25" height="35" fill="#bfe4c8"/><rect x="968" y="522.5" width="35" height="30" fill="#bfe4c8"/><rect x="838" y="562.5" width="25" height="45" fill="#bfe4c8"/><rect x="848" y="662.5" width="30" height="40" fill="#bfe4c8"/><rect x="1008" y="692.5" width="35" height="40" fill="#bfe4c8"/><rect x="1058" y="622.5" width="30" height="25" fill="#bfe4c8"/><rect x="1088" y="722.5" width="25" height="20" fill="#bfe4c8"/><rect x="858" y="812.5" width="30" height="30" fill="#bfe4c8"/><rect x="968" y="902.5" width="30" height="35" fill="#bfe4c8"/><rect x="1028" y="832.5" width="40" height="25" fill="#bfe4c8"/><rect x="948" y="1002.5" width="25" height="30" fill="#bfe4c8"/><rect x="1063" y="1002.5" width="30" height="20" fill="#bfe4c8"/><rect x="868" y="1077.5" width="22" height="28" fill="#bfe4c8"/><rect x="758" y="1172.5" width="25" height="22" fill="#bfe4c8"/><rect x="968" y="1152.5" width="30" height="20" fill="#bfe4c8"/><rect x="838" y="1252.5" width="25" height="30" fill="#bfe4c8"/><rect x="1018" y="1262.5" width="30" height="30" fill="#bfe4c8"/><rect x="1030" y="742.5" width="30" height="25" fill="#bfe4c8"/><rect x="918" y="787.5" width="35" height="25" fill="#bfe4c8"/><rect x="1083" y="502.5" width="22" height="30" fill="#bfe4c8"/><rect x="1138" y="362.5" width="15" height="25" fill="#bfe4c8"/><rect x="1108" y="452.5" width="20" height="20" fill="#bfe4c8"/><rect x="798" y="1022.5" width="30" height="25" fill="#bfe4c8"/><rect x="668" y="1222.5" width="25" height="25" fill="#bfe4c8"/><rect x="748" y="1252.5" width="25" height="30" fill="#bfe4c8"/><rect x="779.9" y="207.1" width="9.2" height="3.4" transform="rotate(96 779.9 207.1)" fill="#8fb3f0"/><rect x="800.8" y="87.3" width="8.1" height="3.2" transform="rotate(78 800.8 87.3)" fill="#8fb3f0"/><rect x="652.9" y="129.5" width="7.4" height="8.0" transform="rotate(22 652.9 129.5)" fill="#8fb3f0"/><rect x="1091.9" y="757.0" width="7.2" height="8.9" transform="rotate(8 1091.9 757.0)" fill="#8fb3f0"/><rect x="1047.2" y="386.1" width="5.2" height="3.7" transform="rotate(56 1047.2 386.1)" fill="#8fb3f0"/><rect x="1026.1" y="245.6" width="8.7" height="6.8" transform="rotate(67 1026.1 245.6)" fill="#8fb3f0"/><rect x="891.9" y="93.5" width="4.5" height="4.2" transform="rotate(122 891.9 93.5)" fill="#8fb3f0"/><rect x="831.8" y="417.7" width="8.7" height="5.7" transform="rotate(54 831.8 417.7)" fill="#8fb3f0"/><rect x="1015.2" y="914.2" width="6.0" height="6.4" transform="rotate(95 1015.2 914.2)" fill="#8fb3f0"/><rect x="1055.6" y="953.5" width="6.3" height="8.9" transform="rotate(21 1055.6 953.5)" fill="#8fb3f0"/><rect x="827.1" y="989.2" width="5.2" height="5.9" transform="rotate(7 827.1 989.2)" fill="#8fb3f0"/><rect x="952.1" y="998.8" width="8.6" height="8.3" transform="rotate(56 952.1 998.8)" fill="#8fb3f0"/><rect x="965.6" y="779.2" width="8.6" height="5.7" transform="rotate(151 965.6 779.2)" fill="#8fb3f0"/><rect x="1090.3" y="624.1" width="9.3" height="3.4" transform="rotate(126 1090.3 624.1)" fill="#8fb3f0"/><rect x="941.6" y="1293.6" width="10.6" height="4.7" transform="rotate(69 941.6 1293.6)" fill="#8fb3f0"/><rect x="952.3" y="41.6" width="7.7" height="4.0" transform="rotate(21 952.3 41.6)" fill="#8fb3f0"/><rect x="647.5" y="1003.5" width="5.0" height="4.5" transform="rotate(70 647.5 1003.5)" fill="#8fb3f0"/><rect x="1053.7" y="116.4" width="7.6" height="6.3" transform="rotate(159 1053.7 116.4)" fill="#8fb3f0"/><rect x="1027.6" y="1127.0" width="6.2" height="5.5" transform="rotate(65 1027.6 1127.0)" fill="#8fb3f0"/><rect x="1060.1" y="1248.0" width="5.2" height="4.1" transform="rotate(42 1060.1 1248.0)" fill="#8fb3f0"/><rect x="912.6" y="351.4" width="4.0" height="5.5" transform="rotate(66 912.6 351.4)" fill="#8fb3f0"/><rect x="901.2" y="1242.0" width="9.5" height="6.1" transform="rotate(111 901.2 1242.0)" fill="#8fb3f0"/><rect x="956.1" y="82.2" width="11.2" height="7.7" transform="rotate(157 956.1 82.2)" fill="#8fb3f0"/><rect x="1016.9" y="518.7" width="7.2" height="3.6" transform="rotate(114 1016.9 518.7)" fill="#8fb3f0"/><rect x="649.1" y="99.4" width="5.7" height="4.0" transform="rotate(61 649.1 99.4)" fill="#8fb3f0"/><rect x="644.3" y="12.8" width="5.2" height="3.6" transform="rotate(65 644.3 12.8)" fill="#8fb3f0"/><rect x="630.8" y="1140.4" width="8.9" height="3.9" transform="rotate(45 630.8 1140.4)" fill="#8fb3f0"/><rect x="791.7" y="482.3" width="5.0" height="8.1" transform="rotate(179 791.7 482.3)" fill="#8fb3f0"/><rect x="851.0" y="636.6" width="4.7" height="3.6" transform="rotate(62 851.0 636.6)" fill="#8fb3f0"/><rect x="750.4" y="1081.7" width="5.3" height="3.1" transform="rotate(171 750.4 1081.7)" fill="#8fb3f0"/><rect x="882.1" y="201.6" width="8.3" height="3.2" transform="rotate(95 882.1 201.6)" fill="#8fb3f0"/><rect x="1107.3" y="1126.2" width="9.6" height="4.6" transform="rotate(66 1107.3 1126.2)" fill="#8fb3f0"/><rect x="701.5" y="1008.3" width="8.3" height="7.7" transform="rotate(59 701.5 1008.3)" fill="#8fb3f0"/><rect x="729.5" y="1059.3" width="11.9" height="8.1" transform="rotate(145 729.5 1059.3)" fill="#8fb3f0"/><rect x="1027.2" y="966.9" width="5.8" height="6.1" transform="rotate(64 1027.2 966.9)" fill="#8fb3f0"/><rect x="632.5" y="48.5" width="6.2" height="4.6" transform="rotate(125 632.5 48.5)" fill="#8fb3f0"/><rect x="1096.3" y="589.4" width="11.5" height="8.9" transform="rotate(172 1096.3 589.4)" fill="#8fb3f0"/><rect x="800.3" y="296.9" width="5.8" height="4.2" transform="rotate(37 800.3 296.9)" fill="#8fb3f0"/><rect x="930.0" y="1173.9" width="10.7" height="5.9" transform="rotate(118 930.0 1173.9)" fill="#8fb3f0"/><rect x="1017.8" y="121.9" width="9.3" height="8.5" transform="rotate(141 1017.8 121.9)" fill="#8fb3f0"/><rect x="993.1" y="629.2" width="5.4" height="7.7" transform="rotate(60 993.1 629.2)" fill="#8fb3f0"/><rect x="1018.4" y="1265.9" width="7.2" height="5.4" transform="rotate(170 1018.4 1265.9)" fill="#8fb3f0"/><rect x="980.4" y="231.8" width="5.0" height="3.9" transform="rotate(163 980.4 231.8)" fill="#8fb3f0"/><rect x="1021.3" y="201.1" width="10.6" height="8.9" transform="rotate(118 1021.3 201.1)" fill="#8fb3f0"/><rect x="793.2" y="720.3" width="5.0" height="3.1" transform="rotate(175 793.2 720.3)" fill="#8fb3f0"/><rect x="942.8" y="691.8" width="11.5" height="5.6" transform="rotate(157 942.8 691.8)" fill="#8fb3f0"/><rect x="1031.1" y="284.7" width="6.0" height="4.8" transform="rotate(43 1031.1 284.7)" fill="#8fb3f0"/><rect x="911.2" y="347.1" width="7.4" height="3.8" transform="rotate(164 911.2 347.1)" fill="#8fb3f0"/><rect x="794.9" y="603.5" width="8.7" height="8.4" transform="rotate(76 794.9 603.5)" fill="#8fb3f0"/><rect x="1076.9" y="659.6" width="8.3" height="6.1" transform="rotate(3 1076.9 659.6)" fill="#8fb3f0"/><rect x="838.1" y="248.7" width="4.0" height="7.8" transform="rotate(31 838.1 248.7)" fill="#8fb3f0"/><rect x="854.7" y="948.0" width="8.5" height="5.0" transform="rotate(93 854.7 948.0)" fill="#8fb3f0"/><rect x="895.7" y="1024.2" width="4.8" height="6.4" transform="rotate(45 895.7 1024.2)" fill="#8fb3f0"/><rect x="756.5" y="1008.7" width="8.1" height="6.4" transform="rotate(137 756.5 1008.7)" fill="#8fb3f0"/><rect x="1074.2" y="584.3" width="8.9" height="6.0" transform="rotate(92 1074.2 584.3)" fill="#8fb3f0"/><rect x="964.4" y="596.0" width="8.3" height="5.9" transform="rotate(169 964.4 596.0)" fill="#8fb3f0"/><rect x="967.6" y="1143.2" width="11.5" height="4.6" transform="rotate(101 967.6 1143.2)" fill="#8fb3f0"/><rect x="1089.6" y="1096.1" width="5.1" height="3.7" transform="rotate(80 1089.6 1096.1)" fill="#8fb3f0"/><rect x="654.3" y="322.9" width="4.6" height="7.0" transform="rotate(141 654.3 322.9)" fill="#8fb3f0"/><rect x="1066.5" y="211.7" width="9.7" height="7.0" transform="rotate(26 1066.5 211.7)" fill="#8fb3f0"/><rect x="1059.4" y="1260.6" width="5.8" height="8.7" transform="rotate(72 1059.4 1260.6)" fill="#8fb3f0"/><rect x="861.6" y="1289.4" width="10.7" height="4.0" transform="rotate(78 861.6 1289.4)" fill="#8fb3f0"/><rect x="875.8" y="450.0" width="5.6" height="4.9" transform="rotate(130 875.8 450.0)" fill="#8fb3f0"/><rect x="838.2" y="35.8" width="6.7" height="6.7" transform="rotate(92 838.2 35.8)" fill="#8fb3f0"/><rect x="650.1" y="1283.3" width="10.3" height="8.8" transform="rotate(19 650.1 1283.3)" fill="#8fb3f0"/><rect x="750.8" y="63.6" width="10.2" height="4.6" transform="rotate(23 750.8 63.6)" fill="#8fb3f0"/><rect x="829.1" y="1188.2" width="10.6" height="4.6" transform="rotate(27 829.1 1188.2)" fill="#8fb3f0"/><rect x="1077.6" y="748.6" width="9.6" height="3.5" transform="rotate(10 1077.6 748.6)" fill="#8fb3f0"/><rect x="962.1" y="561.2" width="4.6" height="8.6" transform="rotate(114 962.1 561.2)" fill="#8fb3f0"/><rect x="1018.8" y="120.5" width="10.8" height="3.4" transform="rotate(155 1018.8 120.5)" fill="#8fb3f0"/><rect x="844.9" y="450.0" width="8.4" height="8.6" transform="rotate(48 844.9 450.0)" fill="#8fb3f0"/><rect x="737.2" y="153.7" width="5.3" height="3.3" transform="rotate(36 737.2 153.7)" fill="#8fb3f0"/><rect x="774.0" y="406.0" width="10.1" height="4.7" transform="rotate(90 774.0 406.0)" fill="#8fb3f0"/><rect x="627.1" y="335.6" width="4.1" height="7.4" transform="rotate(99 627.1 335.6)" fill="#8fb3f0"/><rect x="1085.3" y="149.6" width="10.6" height="5.6" transform="rotate(89 1085.3 149.6)" fill="#8fb3f0"/><rect x="1035.3" y="519.6" width="8.1" height="7.1" transform="rotate(177 1035.3 519.6)" fill="#8fb3f0"/><rect x="789.4" y="1086.1" width="9.7" height="6.8" transform="rotate(73 789.4 1086.1)" fill="#8fb3f0"/><rect x="791.8" y="82.7" width="5.0" height="3.4" transform="rotate(133 791.8 82.7)" fill="#8fb3f0"/><rect x="745.8" y="223.1" width="4.7" height="8.0" transform="rotate(157 745.8 223.1)" fill="#8fb3f0"/><rect x="953.3" y="376.2" width="5.9" height="4.8" transform="rotate(83 953.3 376.2)" fill="#8fb3f0"/><rect x="749.6" y="1253.2" width="11.8" height="6.3" transform="rotate(44 749.6 1253.2)" fill="#8fb3f0"/><rect x="1100.8" y="411.8" width="6.9" height="3.0" transform="rotate(69 1100.8 411.8)" fill="#8fb3f0"/><rect x="855.3" y="661.1" width="5.6" height="6.0" transform="rotate(1 855.3 661.1)" fill="#8fb3f0"/><rect x="750.1" y="128.3" width="7.2" height="3.3" transform="rotate(4 750.1 128.3)" fill="#8fb3f0"/><rect x="770.1" y="312.8" width="8.7" height="6.2" transform="rotate(135 770.1 312.8)" fill="#8fb3f0"/><rect x="946.8" y="936.1" width="11.0" height="5.3" transform="rotate(59 946.8 936.1)" fill="#8fb3f0"/><rect x="1110.4" y="205.3" width="9.8" height="6.9" transform="rotate(8 1110.4 205.3)" fill="#8fb3f0"/><rect x="1035.6" y="1163.1" width="9.0" height="7.4" transform="rotate(146 1035.6 1163.1)" fill="#8fb3f0"/><rect x="870.2" y="1089.6" width="10.4" height="8.0" transform="rotate(105 870.2 1089.6)" fill="#8fb3f0"/><rect x="1064.4" y="893.4" width="9.5" height="4.4" transform="rotate(6 1064.4 893.4)" fill="#8fb3f0"/><rect x="670.5" y="1090.7" width="8.5" height="6.8" transform="rotate(113 670.5 1090.7)" fill="#8fb3f0"/><rect x="958.3" y="643.7" width="4.0" height="7.8" transform="rotate(135 958.3 643.7)" fill="#8fb3f0"/><rect x="869.5" y="702.9" width="9.3" height="3.4" transform="rotate(133 869.5 702.9)" fill="#8fb3f0"/><rect x="744.1" y="108.5" width="6.1" height="7.4" transform="rotate(37 744.1 108.5)" fill="#8fb3f0"/><rect x="987.9" y="1271.2" width="8.0" height="5.3" transform="rotate(86 987.9 1271.2)" fill="#8fb3f0"/><rect x="959.8" y="1001.9" width="8.9" height="6.9" transform="rotate(14 959.8 1001.9)" fill="#8fb3f0"/><rect x="691.7" y="340.1" width="9.9" height="4.8" transform="rotate(102 691.7 340.1)" fill="#8fb3f0"/><rect x="624.2" y="90.8" width="6.2" height="7.0" transform="rotate(125 624.2 90.8)" fill="#8fb3f0"/><rect x="955.9" y="387.7" width="8.1" height="5.8" transform="rotate(84 955.9 387.7)" fill="#8fb3f0"/><rect x="677.3" y="1165.3" width="5.6" height="8.9" transform="rotate(169 677.3 1165.3)" fill="#8fb3f0"/><rect x="1027.9" y="1261.4" width="7.6" height="4.6" transform="rotate(38 1027.9 1261.4)" fill="#8fb3f0"/><rect x="1090.8" y="284.3" width="8.7" height="3.9" transform="rotate(94 1090.8 284.3)" fill="#8fb3f0"/><rect x="1094.4" y="183.6" width="10.6" height="6.1" transform="rotate(160 1094.4 183.6)" fill="#8fb3f0"/><rect x="969.7" y="311.0" width="11.2" height="5.9" transform="rotate(4 969.7 311.0)" fill="#8fb3f0"/><rect x="843.4" y="402.0" width="5.1" height="5.1" transform="rotate(57 843.4 402.0)" fill="#8fb3f0"/><rect x="1038.1" y="14.7" width="10.0" height="8.0" transform="rotate(22 1038.1 14.7)" fill="#8fb3f0"/><rect x="1081.2" y="932.3" width="11.2" height="4.7" transform="rotate(67 1081.2 932.3)" fill="#8fb3f0"/><rect x="814.4" y="1300.9" width="8.7" height="5.2" transform="rotate(77 814.4 1300.9)" fill="#8fb3f0"/><rect x="755.6" y="74.8" width="4.8" height="8.0" transform="rotate(51 755.6 74.8)" fill="#8fb3f0"/><rect x="458" y="77.5" width="10" height="27" rx="3" fill="#93b7f3"/><rect x="473" y="182.5" width="12" height="10" rx="3" fill="#93b7f3"/><rect x="428" y="1072.5" width="12" height="20" rx="3" fill="#93b7f3"/><polygon points="1093.0,45.5 1103.0,43.5 1114.0,52.5 1120.0,77.5 1123.0,90.5 1116.0,92.5 1106.0,82.5 1089.0,65.5 " fill="#93b7f3"/><polygon points="1105.0,122.5 1120.0,120.5 1123.0,152.5 1115.0,157.5 1106.0,142.5 " fill="#93b7f3"/><path d="M440.5 209.5 L290.0 430.5 L290.0 726.0 L616.0 1014.0 M469.7 209.5 L503.0 292.5 L541.0 326.5 L616.6 382.5 L675.0 428.5 L757.5 552.5 L784.0 625.5 L784.0 802.5 L770.0 889.5 L758.0 948.5 L720.0 992.5 L616.0 1015.5" stroke="#8fb4ec" stroke-width="1.3" fill="none"/><path d="M528.0 977.5 L543.0 980.5 L548.0 972.5 L558.0 987.5 L568.0 984.5 L578.0 996.5 L593.0 998.5 L615.0 1014.5" stroke="#8fb4ec" stroke-width="4" fill="none"/><path d="M858 2.5 V1306.5 M918 2.5 V1306.5 M998 2.5 V1306.5 M1048 2.5 V1306.5 M1098 2.5 V1306.5 M648 1018.5 V1306.5 M668 1018.5 V1306.5 M688 1018.5 V1306.5 M748 1018.5 V1306.5 M768 1018.5 V1306.5 M818 42.5 H1158 M818 80.5 H1158 M818 118.5 H1158 M818 156.5 H1158 M818 194.5 H1158 M818 232.5 H1158 M818 270.5 H1158 M818 308.5 H1158 M818 346.5 H1158 M818 384.5 H1158 M818 422.5 H1158 M818 460.5 H1158 M818 498.5 H1158 M818 536.5 H1158 M818 574.5 H1158 M818 612.5 H1158 M818 650.5 H1158 M818 688.5 H1158 M818 726.5 H1118 M818 764.5 H1118 M818 802.5 H1118 M818 840.5 H1118 M818 878.5 H1118 M818 916.5 H1118 M818 954.5 H1118 M818 992.5 H1118 M618 1030.5 H1118 M618 1068.5 H1118 M618 1106.5 H1118 M618 1144.5 H1118 M618 1182.5 H1118 M618 1220.5 H1118 M618 1258.5 H1118 M618 1296.5 H1118 " stroke="#fafafa" stroke-width="2" fill="none" opacity=".9" clip-path="url(#urbclip)"/><polygon points="835.0,1.5 974.0,1.5 974.0,108.5 835.0,108.5" fill="#93d1a6"/><path d="M629.0 224.5 L658.0 232.5 L728.0 227.5 L768.0 242.5 L798.0 302.5 L768.0 332.5 L708.0 347.5 L668.0 342.5 L629.0 302.5 L629.0 224.5 M713.0 238.5 L728.0 292.5 L713.0 332.5 M511.0 147.5 L818.0 152.5 M591.0 2.5 L591.0 202.5 M768.0 2.5 L768.0 202.5" stroke="#fafafa" stroke-width="2.2" fill="none"/><path d="M0.0 172.0 L83.6 172.0 L83.6 217.9 L440.5 217.9 M81.5 217.9 L0.0 293.0" stroke="#fafafa" stroke-width="2.5" fill="none"/><path d="M164.0 0.5 L304.0 117.5 L401.0 198.5" stroke="#fafafa" stroke-width="2.5" fill="none"/><path d="M0.0 100.5 L294.0 101.5 L401.0 197.0 L599.0 205.5 L828.0 211.5 L968.0 214.5 L1197.0 222.5" stroke="#efb64a" stroke-width="6.1" fill="none" stroke-linejoin="round"/><path d="M0.0 100.5 L294.0 101.5 L401.0 197.0 L599.0 205.5 L828.0 211.5 L968.0 214.5 L1197.0 222.5" stroke="#fcd98c" stroke-width="2.9" fill="none" stroke-linejoin="round"/><path d="M2.0 947.5 L248.5 1306.5" stroke="#efb64a" stroke-width="6.1" fill="none" stroke-linejoin="round"/><path d="M2.0 947.5 L248.5 1306.5" stroke="#fcd98c" stroke-width="2.9" fill="none" stroke-linejoin="round"/><path d="M800.0 0.5 L800.0 101.5 L831.0 121.5 L824.0 402.5 L820.7 802.5 L825.4 1306.5" stroke="#efb64a" stroke-width="6.1" fill="none" stroke-linejoin="round"/><path d="M800.0 0.5 L800.0 101.5 L831.0 121.5 L824.0 402.5 L820.7 802.5 L825.4 1306.5" stroke="#fcd98c" stroke-width="2.9" fill="none" stroke-linejoin="round"/><path d="M1068.0 0.5 L1008.0 72.5 L969.6 127.0 L888.0 253.5 L891.0 802.5 L898.0 1002.5 L898.0 1306.5" stroke="#efb64a" stroke-width="6.1" fill="none" stroke-linejoin="round"/><path d="M1068.0 0.5 L1008.0 72.5 L969.6 127.0 L888.0 253.5 L891.0 802.5 L898.0 1002.5 L898.0 1306.5" stroke="#fcd98c" stroke-width="2.9" fill="none" stroke-linejoin="round"/><path d="M976.6 0.5 L976.6 422.5 L951.0 602.5 L951.0 1306.5" stroke="#efb64a" stroke-width="5.1" fill="none" stroke-linejoin="round"/><path d="M976.6 0.5 L976.6 422.5 L951.0 602.5 L951.0 1306.5" stroke="#fcd98c" stroke-width="1.9" fill="none" stroke-linejoin="round"/><path d="M1025.0 0.5 L1025.0 652.5 L1004.0 752.5 L1004.0 1306.5" stroke="#efb64a" stroke-width="5.1" fill="none" stroke-linejoin="round"/><path d="M1025.0 0.5 L1025.0 652.5 L1004.0 752.5 L1004.0 1306.5" stroke="#fcd98c" stroke-width="1.9" fill="none" stroke-linejoin="round"/><path d="M1064.0 0.5 L1073.0 52.5 L1077.0 113.5 L1128.0 186.5 L1122.7 302.5 L1118.0 652.5 L1085.6 688.5 L1071.6 874.5 L1016.0 967.5 L1011.0 1152.5 L983.5 1306.5" stroke="#efb64a" stroke-width="6.1" fill="none" stroke-linejoin="round"/><path d="M1064.0 0.5 L1073.0 52.5 L1077.0 113.5 L1128.0 186.5 L1122.7 302.5 L1118.0 652.5 L1085.6 688.5 L1071.6 874.5 L1016.0 967.5 L1011.0 1152.5 L983.5 1306.5" stroke="#fcd98c" stroke-width="2.9" fill="none" stroke-linejoin="round"/><path d="M1150.5 0.5 L1150.5 422.5 L1138.0 642.5 L1122.7 772.5 L1095.0 1005.0 L1078.0 1202.5 L1066.0 1306.5" stroke="#efb64a" stroke-width="4.800000000000001" fill="none" stroke-linejoin="round"/><path d="M1150.5 0.5 L1150.5 422.5 L1138.0 642.5 L1122.7 772.5 L1095.0 1005.0 L1078.0 1202.5 L1066.0 1306.5" stroke="#fcd98c" stroke-width="1.6" fill="none" stroke-linejoin="round"/><path d="M719.0 1047.5 L719.0 1306.5" stroke="#efb64a" stroke-width="5.1" fill="none" stroke-linejoin="round"/><path d="M719.0 1047.5 L719.0 1306.5" stroke="#fcd98c" stroke-width="1.9" fill="none" stroke-linejoin="round"/><path d="M618.0 1146.5 L618.0 1306.5" stroke="#efb64a" stroke-width="5.1" fill="none" stroke-linejoin="round"/><path d="M618.0 1146.5 L618.0 1306.5" stroke="#fcd98c" stroke-width="1.9" fill="none" stroke-linejoin="round"/><path d="M618.0 1149.5 L875.0 1149.5 L888.0 1142.5 L968.0 1140.5 L1208.0 1140.5" stroke="#efb64a" stroke-width="5.6" fill="none" stroke-linejoin="round"/><path d="M618.0 1149.5 L875.0 1149.5 L888.0 1142.5 L968.0 1140.5 L1208.0 1140.5" stroke="#fcd98c" stroke-width="2.4" fill="none" stroke-linejoin="round"/><path d="M719.0 1048.5 L819.6 1082.5 L825.4 1108.5" stroke="#efb64a" stroke-width="5.1" fill="none" stroke-linejoin="round"/><path d="M719.0 1048.5 L819.6 1082.5 L825.4 1108.5" stroke="#fcd98c" stroke-width="1.9" fill="none" stroke-linejoin="round"/><path d="M828.0 140.9 L1158.0 140.9" stroke="#efb64a" stroke-width="5.1" fill="none" stroke-linejoin="round"/><path d="M828.0 140.9 L1158.0 140.9" stroke="#fcd98c" stroke-width="1.9" fill="none" stroke-linejoin="round"/><path d="M729.0 284.5 L1158.0 284.5" stroke="#efb64a" stroke-width="5.1" fill="none" stroke-linejoin="round"/><path d="M729.0 284.5 L1158.0 284.5" stroke="#fcd98c" stroke-width="1.9" fill="none" stroke-linejoin="round"/><path d="M828.0 368.2 L1168.0 368.2" stroke="#efb64a" stroke-width="5.1" fill="none" stroke-linejoin="round"/><path d="M828.0 368.2 L1168.0 368.2" stroke="#fcd98c" stroke-width="1.9" fill="none" stroke-linejoin="round"/><path d="M820.0 437.5 L1168.0 437.5" stroke="#efb64a" stroke-width="5.1" fill="none" stroke-linejoin="round"/><path d="M820.0 437.5 L1168.0 437.5" stroke="#fcd98c" stroke-width="1.9" fill="none" stroke-linejoin="round"/><path d="M820.0 590.5 L1158.0 590.5" stroke="#efb64a" stroke-width="5.1" fill="none" stroke-linejoin="round"/><path d="M820.0 590.5 L1158.0 590.5" stroke="#fcd98c" stroke-width="1.9" fill="none" stroke-linejoin="round"/><path d="M820.0 772.5 L1128.0 772.5" stroke="#efb64a" stroke-width="5.1" fill="none" stroke-linejoin="round"/><path d="M820.0 772.5 L1128.0 772.5" stroke="#fcd98c" stroke-width="1.9" fill="none" stroke-linejoin="round"/><path d="M808.0 919.5 L1118.0 919.5" stroke="#efb64a" stroke-width="5.1" fill="none" stroke-linejoin="round"/><path d="M808.0 919.5 L1118.0 919.5" stroke="#fcd98c" stroke-width="1.9" fill="none" stroke-linejoin="round"/><path d="M770.0 983.5 L1113.0 983.5" stroke="#efb64a" stroke-width="5.1" fill="none" stroke-linejoin="round"/><path d="M770.0 983.5 L1113.0 983.5" stroke="#fcd98c" stroke-width="1.9" fill="none" stroke-linejoin="round"/><path d="M828.0 1106.5 L1108.0 1106.5" stroke="#efb64a" stroke-width="5.1" fill="none" stroke-linejoin="round"/><path d="M828.0 1106.5 L1108.0 1106.5" stroke="#fcd98c" stroke-width="1.9" fill="none" stroke-linejoin="round"/><path d="M618.0 1219.5 L1088.0 1219.5" stroke="#efb64a" stroke-width="5.1" fill="none" stroke-linejoin="round"/><path d="M618.0 1219.5 L1088.0 1219.5" stroke="#fcd98c" stroke-width="1.9" fill="none" stroke-linejoin="round"/><path d="M1173.0 0.5 L1173.0 152.5 L1174.0 317.5 L1178.0 456.5 L1164.0 602.5 L1148.8 682.5 L1130.0 768.5 L1118.0 902.5 L1108.0 1022.5 L1098.0 1132.5 L1085.6 1199.1 L1076.0 1306.5" stroke="#93b7f3" stroke-width="6" fill="none"/><polygon points="1162.0,0.5 1183.0,0.5 1183.0,132.5 1181.0,302.5 1182.0,402.5 1180.0,462.5 1173.0,462.5 1165.0,402.5 1163.0,302.5 1162.0,132.5" fill="#93b7f3"/><polygon points="1194.6,0.0 1197.8,131.5 1197.0,294.0 1191.0,402.5 1186.0,507.1 1169.7,611.5 1151.0,716.3 1135.7,820.9 1125.0,925.5 1117.0,1030.1 1107.0,1134.5 1091.0,1239.3 1083.0,1306.5 1789.5,1306.5 1789.5,0.0" fill="#93b7f3"/><text x="595.0" y="54.2" font-size="17.3" fill="#3a3a3a" font-weight="normal" text-anchor="middle" stroke="#fff" stroke-width="3" stroke-linejoin="round" paint-order="stroke" >Westlake</text><text x="1112.5" y="14.5" font-size="17.3" fill="#3a3a3a" font-weight="normal" text-anchor="middle" stroke="#fff" stroke-width="3" stroke-linejoin="round" paint-order="stroke" >Mangonia</text><text x="1112.5" y="32.5" font-size="17.3" fill="#3a3a3a" font-weight="normal" text-anchor="middle" stroke="#fff" stroke-width="3" stroke-linejoin="round" paint-order="stroke" >Park</text><text x="765.0" y="140.1" font-size="17.3" fill="#3a3a3a" font-weight="normal" text-anchor="middle" stroke="#fff" stroke-width="3" stroke-linejoin="round" paint-order="stroke" >Royal Palm</text><text x="765.0" y="158.5" font-size="17.3" fill="#3a3a3a" font-weight="normal" text-anchor="middle" stroke="#fff" stroke-width="3" stroke-linejoin="round" paint-order="stroke" >Beach</text><text x="415.4" y="195.5" font-size="17.3" fill="#3a3a3a" font-weight="normal" text-anchor="middle" stroke="#fff" stroke-width="3" stroke-linejoin="round" paint-order="stroke" >Twentymile</text><text x="415.4" y="213.5" font-size="17.3" fill="#3a3a3a" font-weight="normal" text-anchor="middle" stroke="#fff" stroke-width="3" stroke-linejoin="round" paint-order="stroke" >Bend</text><text x="681.6" y="265.5" font-size="17.3" fill="#3a3a3a" font-weight="normal" text-anchor="middle" stroke="#fff" stroke-width="3" stroke-linejoin="round" paint-order="stroke" >Wellington</text><text x="27.0" y="304.5" font-size="17.3" fill="#3a3a3a" font-weight="normal" text-anchor="middle" stroke="#fff" stroke-width="3" stroke-linejoin="round" paint-order="stroke" >Bend</text><text x="1009.0" y="192.5" font-size="17.3" fill="#3a3a3a" font-weight="normal" text-anchor="middle" stroke="#fff" stroke-width="3" stroke-linejoin="round" paint-order="stroke" >Haverhill</text><text x="975.6" y="350.5" font-size="17.3" fill="#3a3a3a" font-weight="normal" text-anchor="middle" stroke="#fff" stroke-width="3" stroke-linejoin="round" paint-order="stroke" >Greenacres</text><text x="1122.7" y="368.2" font-size="17.3" fill="#3a3a3a" font-weight="normal" text-anchor="middle" stroke="#fff" stroke-width="3" stroke-linejoin="round" paint-order="stroke" >Lake Worth</text><text x="1122.7" y="385.8" font-size="17.3" fill="#3a3a3a" font-weight="normal" text-anchor="middle" stroke="#fff" stroke-width="3" stroke-linejoin="round" paint-order="stroke" >Beach</text><text x="1159.8" y="451.5" font-size="17.3" fill="#3a3a3a" font-weight="normal" text-anchor="middle" stroke="#fff" stroke-width="3" stroke-linejoin="round" paint-order="stroke" >Lantana</text><text x="1157.5" y="501.5" font-size="17.3" fill="#3a3a3a" font-weight="normal" text-anchor="middle" stroke="#fff" stroke-width="3" stroke-linejoin="round" paint-order="stroke" >Hypoluxo</text><text x="946.4" y="541.2" font-size="17.3" fill="#3a3a3a" font-weight="normal" text-anchor="middle" stroke="#fff" stroke-width="3" stroke-linejoin="round" paint-order="stroke" >Aberdeen</text><text x="1075.0" y="577.5" font-size="17.3" fill="#3a3a3a" font-weight="normal" text-anchor="middle" stroke="#fff" stroke-width="3" stroke-linejoin="round" paint-order="stroke" >Boynton</text><text x="1068.0" y="595.5" font-size="17.3" fill="#3a3a3a" font-weight="normal" text-anchor="middle" stroke="#fff" stroke-width="3" stroke-linejoin="round" paint-order="stroke" >Beach</text><text x="1182.0" y="598.5" font-size="17.3" fill="#3a3a3a" font-weight="normal" text-anchor="middle" stroke="#fff" stroke-width="3" stroke-linejoin="round" paint-order="stroke" >Ocean Ridge</text><text x="1162.0" y="644.2" font-size="17.3" fill="#3a3a3a" font-weight="normal" text-anchor="middle" stroke="#fff" stroke-width="3" stroke-linejoin="round" paint-order="stroke" >Briny Breezes</text><text x="1039.0" y="660.5" font-size="17.3" fill="#3a3a3a" font-weight="normal" text-anchor="middle" stroke="#fff" stroke-width="3" stroke-linejoin="round" paint-order="stroke" >Golf</text><text x="1152.8" y="681.9" font-size="17.3" fill="#3a3a3a" font-weight="normal" text-anchor="middle" stroke="#fff" stroke-width="3" stroke-linejoin="round" paint-order="stroke" >Gulf Stream</text><text x="1113.4" y="760.8" font-size="17.3" fill="#3a3a3a" font-weight="normal" text-anchor="middle" stroke="#fff" stroke-width="3" stroke-linejoin="round" paint-order="stroke" >Delray Beach</text><text x="965.0" y="800.2" font-size="17.3" fill="#3a3a3a" font-weight="normal" text-anchor="middle" stroke="#fff" stroke-width="3" stroke-linejoin="round" paint-order="stroke" >Kings Point</text><text x="1129.6" y="904.5" font-size="17.3" fill="#3a3a3a" font-weight="normal" text-anchor="middle" stroke="#fff" stroke-width="3" stroke-linejoin="round" paint-order="stroke" >Highland</text><text x="1129.6" y="923.1" font-size="17.3" fill="#3a3a3a" font-weight="normal" text-anchor="middle" stroke="#fff" stroke-width="3" stroke-linejoin="round" paint-order="stroke" >Beach</text><text x="865.0" y="917.1" font-size="17.3" fill="#3a3a3a" font-weight="normal" text-anchor="middle" stroke="#fff" stroke-width="3" stroke-linejoin="round" paint-order="stroke" >Whisper Walk</text><text x="867.6" y="946.3" font-size="17.3" fill="#3a3a3a" font-weight="normal" text-anchor="middle" stroke="#fff" stroke-width="3" stroke-linejoin="round" paint-order="stroke" >Hamptons at</text><text x="867.6" y="964.9" font-size="17.3" fill="#3a3a3a" font-weight="normal" text-anchor="middle" stroke="#fff" stroke-width="3" stroke-linejoin="round" paint-order="stroke" >Boca Raton</text><text x="810.8" y="986.2" font-size="17.3" fill="#3a3a3a" font-weight="normal" text-anchor="middle" stroke="#fff" stroke-width="3" stroke-linejoin="round" paint-order="stroke" >Mission Bay</text><text x="860.6" y="1053.0" font-size="17.3" fill="#3a3a3a" font-weight="normal" text-anchor="middle" stroke="#fff" stroke-width="3" stroke-linejoin="round" paint-order="stroke" >Sandalfoot</text><text x="860.6" y="1071.5" font-size="17.3" fill="#3a3a3a" font-weight="normal" text-anchor="middle" stroke="#fff" stroke-width="3" stroke-linejoin="round" paint-order="stroke" >Cove</text><text x="1055.4" y="1105.5" font-size="17.3" fill="#3a3a3a" font-weight="normal" text-anchor="middle" stroke="#fff" stroke-width="3" stroke-linejoin="round" paint-order="stroke" >Deerfield</text><text x="1055.4" y="1122.5" font-size="17.3" fill="#3a3a3a" font-weight="normal" text-anchor="middle" stroke="#fff" stroke-width="3" stroke-linejoin="round" paint-order="stroke" >Beach</text><text x="1099.5" y="1164.3" font-size="17.3" fill="#3a3a3a" font-weight="normal" text-anchor="middle" stroke="#fff" stroke-width="3" stroke-linejoin="round" paint-order="stroke" >Hillsboro</text><text x="1099.5" y="1182.9" font-size="17.3" fill="#3a3a3a" font-weight="normal" text-anchor="middle" stroke="#fff" stroke-width="3" stroke-linejoin="round" paint-order="stroke" >Beach</text><text x="1081.0" y="1210.5" font-size="17.3" fill="#3a3a3a" font-weight="normal" text-anchor="middle" stroke="#fff" stroke-width="3" stroke-linejoin="round" paint-order="stroke" >Lighthouse</text><text x="1081.0" y="1227.5" font-size="17.3" fill="#3a3a3a" font-weight="normal" text-anchor="middle" stroke="#fff" stroke-width="3" stroke-linejoin="round" paint-order="stroke" >Point</text><text x="714.6" y="1132.0" font-size="17.3" fill="#3a3a3a" font-weight="normal" text-anchor="middle" stroke="#fff" stroke-width="3" stroke-linejoin="round" paint-order="stroke" >Parkland</text><text x="676.7" y="1229.5" font-size="17.3" fill="#3a3a3a" font-weight="normal" text-anchor="middle" stroke="#fff" stroke-width="3" stroke-linejoin="round" paint-order="stroke" >Coral Springs</text><text x="879.0" y="1277.9" font-size="17.3" fill="#3a3a3a" font-weight="normal" text-anchor="middle" stroke="#fff" stroke-width="3" stroke-linejoin="round" paint-order="stroke" >Coconut Creek</text><text x="563.0" y="133.5" font-size="20.5" fill="#2b8a50" font-weight="normal" text-anchor="middle" stroke="#fff" stroke-width="3" stroke-linejoin="round" paint-order="stroke" >Lion Country</text><text x="563.0" y="153.9" font-size="20.5" fill="#2b8a50" font-weight="normal" text-anchor="middle" stroke="#fff" stroke-width="3" stroke-linejoin="round" paint-order="stroke" >Safari</text><text x="307.0" y="300.5" font-size="20.5" fill="#2b8a50" font-weight="normal" text-anchor="middle" stroke="#fff" stroke-width="3" stroke-linejoin="round" paint-order="stroke" >Stormwater</text><text x="307.0" y="322.3" font-size="20.5" fill="#2b8a50" font-weight="normal" text-anchor="middle" stroke="#fff" stroke-width="3" stroke-linejoin="round" paint-order="stroke" >Treatment</text><text x="307.0" y="343.1" font-size="20.5" fill="#2b8a50" font-weight="normal" text-anchor="middle" stroke="#fff" stroke-width="3" stroke-linejoin="round" paint-order="stroke" >Area 1 West</text><text x="60.6" y="890.0" font-size="19.5" fill="#2b8a50" font-weight="normal" text-anchor="middle" stroke="#fff" stroke-width="3" stroke-linejoin="round" paint-order="stroke" >Stormwater</text><text x="60.6" y="911.5" font-size="19.5" fill="#2b8a50" font-weight="normal" text-anchor="middle" stroke="#fff" stroke-width="3" stroke-linejoin="round" paint-order="stroke" >Treatment</text><text x="60.6" y="932.5" font-size="19.5" fill="#2b8a50" font-weight="normal" text-anchor="middle" stroke="#fff" stroke-width="3" stroke-linejoin="round" paint-order="stroke" >Area 2</text><text x="60.6" y="953.5" font-size="19.5" fill="#2b8a50" font-weight="normal" text-anchor="middle" stroke="#fff" stroke-width="3" stroke-linejoin="round" paint-order="stroke" >Waterfowl...</text><text x="1152.8" y="125.5" font-size="23" fill="#222" font-weight="bold" text-anchor="middle" stroke="#fff" stroke-width="3" stroke-linejoin="round" paint-order="stroke" >West Palm</text><text x="1152.8" y="150.2" font-size="23" fill="#222" font-weight="bold" text-anchor="middle" stroke="#fff" stroke-width="3" stroke-linejoin="round" paint-order="stroke" >Beach</text><text x="989.6" y="992.7" font-size="22" fill="#222" font-weight="bold" text-anchor="middle" stroke="#fff" stroke-width="3" stroke-linejoin="round" paint-order="stroke" >Boca Raton</text><text x="998.8" y="1301.1" font-size="22" fill="#222" font-weight="bold" text-anchor="middle" stroke="#fff" stroke-width="3" stroke-linejoin="round" paint-order="stroke" >Pompano</text><text x="990.5" y="127.0" font-size="13" fill="#555" font-weight="normal" text-anchor="middle" stroke="#fff" stroke-width="3" stroke-linejoin="round" paint-order="stroke" letter-spacing="1.3">CENTURY</text><text x="990.5" y="140.9" font-size="13" fill="#555" font-weight="normal" text-anchor="middle" stroke="#fff" stroke-width="3" stroke-linejoin="round" paint-order="stroke" letter-spacing="1.3">VILLAGE</text><text x="1046.0" y="59.5" font-size="13" fill="#555" font-weight="normal" text-anchor="middle" stroke="#fff" stroke-width="3" stroke-linejoin="round" paint-order="stroke" letter-spacing="1.3">VILLAGES</text><text x="1046.0" y="73.5" font-size="13" fill="#555" font-weight="normal" text-anchor="middle" stroke="#fff" stroke-width="3" stroke-linejoin="round" paint-order="stroke" letter-spacing="1.3">OF PALM</text><text x="1046.0" y="86.5" font-size="13" fill="#555" font-weight="normal" text-anchor="middle" stroke="#fff" stroke-width="3" stroke-linejoin="round" paint-order="stroke" letter-spacing="1.3">BEACH LAKES</text><text x="662.6" y="210.3" font-size="13" fill="#555" font-weight="normal" text-anchor="middle" stroke="#fff" stroke-width="3" stroke-linejoin="round" paint-order="stroke" letter-spacing="1.3">LOXAHATCHEE</text><text x="1085.6" y="617.5" font-size="13" fill="#555" font-weight="normal" text-anchor="middle" stroke="#fff" stroke-width="3" stroke-linejoin="round" paint-order="stroke" letter-spacing="1.3">LEISUREVILLE</text><text x="631.5" y="1167.0" font-size="13" fill="#555" font-weight="normal" text-anchor="middle" stroke="#fff" stroke-width="3" stroke-linejoin="round" paint-order="stroke" letter-spacing="1.3">WYNDHAM</text><text x="631.5" y="1180.1" font-size="13" fill="#555" font-weight="normal" text-anchor="middle" stroke="#fff" stroke-width="3" stroke-linejoin="round" paint-order="stroke" letter-spacing="1.3">LAKES</text><text x="719.0" y="1273.5" font-size="13" fill="#555" font-weight="normal" text-anchor="middle" stroke="#fff" stroke-width="3" stroke-linejoin="round" paint-order="stroke" letter-spacing="1.3">UNIVERSITY</text><text x="719.0" y="1286.5" font-size="13" fill="#555" font-weight="normal" text-anchor="middle" stroke="#fff" stroke-width="3" stroke-linejoin="round" paint-order="stroke" letter-spacing="1.3">DRIVE</text><text x="890.0" y="547.5" font-size="15" fill="#555" font-weight="normal" text-anchor="middle" stroke="#fff" stroke-width="3" stroke-linejoin="round" paint-order="stroke" transform="rotate(90 890 547.5)">Florida's Tpke</text><text x="1180.0" y="233.5" font-size="15" fill="#4a78c8" font-weight="normal" text-anchor="middle" stroke="#fff" stroke-width="3" stroke-linejoin="round" paint-order="stroke" transform="rotate(90 1180 233.5)">Lake Worth Lagoon</text><path d="M24.3 92.5 Q24.3 88.0 28.3 88.0 Q31.1 90.5 38.0 88.0 Q44.9 90.5 47.7 88.0 Q51.7 88.0 51.7 92.5 L51.7 101.5 C51.7 107.5 41.0 108.0 38.0 111.0 C35.0 108.0 24.3 107.5 24.3 101.5 Z" fill="#fff" stroke="#444" stroke-width="1.4"/><text x="38.0" y="105.0" font-size="13.5" fill="#333" text-anchor="middle">98</text><path d="M336.3 135.5 Q336.3 131.0 340.3 131.0 Q343.1 133.5 350.0 131.0 Q356.9 133.5 359.7 131.0 Q363.7 131.0 363.7 135.5 L363.7 144.5 C363.7 150.5 353.0 151.0 350.0 154.0 C347.0 151.0 336.3 150.5 336.3 144.5 Z" fill="#fff" stroke="#444" stroke-width="1.4"/><text x="350.0" y="148.0" font-size="13.5" fill="#333" text-anchor="middle">98</text><rect x="788.8" y="69.5" width="16.5" height="18.5" rx="9" fill="#fff" stroke="#444" stroke-width="1.3"/><text x="797.0" y="85.0" font-size="13.5" fill="#333" text-anchor="middle">7</text><path d="M1136.9 36.5 Q1136.9 32.0 1140.9 32.0 Q1143.0 34.5 1149.0 32.0 Q1155.0 34.5 1157.1 32.0 Q1161.1 32.0 1161.1 36.5 L1161.1 45.5 C1161.1 51.5 1152.0 52.0 1149.0 55.0 C1146.0 52.0 1136.9 51.5 1136.9 45.5 Z" fill="#fff" stroke="#444" stroke-width="1.4"/><text x="1149.0" y="49.0" font-size="13.5" fill="#333" text-anchor="middle">1</text><rect x="890.2" y="133.5" width="31.5" height="18.5" rx="9" fill="#fff" stroke="#444" stroke-width="1.3"/><text x="906.0" y="149.0" font-size="13.5" fill="#333" text-anchor="middle">704</text><rect x="1032.2" y="135.5" width="31.5" height="18.5" rx="9" fill="#fff" stroke="#444" stroke-width="1.3"/><text x="1048.0" y="151.0" font-size="13.5" fill="#333" text-anchor="middle">704</text><path d="M930.3 207.5 Q930.3 203.0 934.3 203.0 Q937.1 205.5 944.0 203.0 Q950.9 205.5 953.7 203.0 Q957.7 203.0 957.7 207.5 L957.7 216.5 C957.7 222.5 947.0 223.0 944.0 226.0 C941.0 223.0 930.3 222.5 930.3 216.5 Z" fill="#fff" stroke="#444" stroke-width="1.4"/><text x="944.0" y="220.0" font-size="13.5" fill="#333" text-anchor="middle">98</text><path d="M1138.9 247.5 Q1138.9 243.0 1142.9 243.0 Q1145.0 245.5 1151.0 243.0 Q1157.0 245.5 1159.1 243.0 Q1163.1 243.0 1163.1 247.5 L1163.1 256.5 C1163.1 262.5 1154.0 263.0 1151.0 266.0 C1148.0 263.0 1138.9 262.5 1138.9 256.5 Z" fill="#fff" stroke="#444" stroke-width="1.4"/><text x="1151.0" y="260.0" font-size="13.5" fill="#333" text-anchor="middle">1</text><path d="M1106.0 259.5 h24 v9 c0 8 -12 12 -12 12 c0 0 -12 -4 -12 -12z" fill="#2d5fae" stroke="#fff" stroke-width="1.2"/><path d="M1106.0 255.5 q6 2 12 -1 q6 3 12 1 v5 h-24z" fill="#d33"/><text x="1118.0" y="273.5" font-size="14" fill="#fff" text-anchor="middle" font-weight="bold">95</text><rect x="1009.2" y="273.5" width="31.5" height="18.5" rx="9" fill="#fff" stroke="#444" stroke-width="1.3"/><text x="1025.0" y="289.0" font-size="13.5" fill="#333" text-anchor="middle">809</text><rect x="839.2" y="276.5" width="31.5" height="18.5" rx="9" fill="#fff" stroke="#444" stroke-width="1.3"/><text x="855.0" y="292.0" font-size="13.5" fill="#333" text-anchor="middle">882</text><rect x="1148.8" y="326.5" width="16.5" height="18.5" rx="9" fill="#fff" stroke="#444" stroke-width="1.3"/><text x="1157.0" y="342.0" font-size="13.5" fill="#333" text-anchor="middle">5</text><rect x="917.2" y="358.5" width="31.5" height="18.5" rx="9" fill="#fff" stroke="#444" stroke-width="1.3"/><text x="933.0" y="374.0" font-size="13.5" fill="#333" text-anchor="middle">802</text><rect x="834.2" y="425.5" width="31.5" height="18.5" rx="9" fill="#fff" stroke="#444" stroke-width="1.3"/><text x="850.0" y="441.0" font-size="13.5" fill="#333" text-anchor="middle">812</text><rect x="931.2" y="429.5" width="31.5" height="18.5" rx="9" fill="#fff" stroke="#444" stroke-width="1.3"/><text x="947.0" y="445.0" font-size="13.5" fill="#333" text-anchor="middle">812</text><rect x="1025.2" y="432.5" width="31.5" height="18.5" rx="9" fill="#fff" stroke="#444" stroke-width="1.3"/><text x="1041.0" y="448.0" font-size="13.5" fill="#333" text-anchor="middle">812</text><path d="M802.7 453.5 Q802.7 449.0 806.7 449.0 Q810.4 451.5 818.0 449.0 Q825.6 451.5 829.3 449.0 Q833.3 449.0 833.3 453.5 L833.3 462.5 C833.3 468.5 821.0 469.0 818.0 472.0 C815.0 469.0 802.7 468.5 802.7 462.5 Z" fill="#fff" stroke="#444" stroke-width="1.4"/><text x="818.0" y="466.0" font-size="13.5" fill="#333" text-anchor="middle">441</text><path d="M1108.0 460.5 h24 v9 c0 8 -12 12 -12 12 c0 0 -12 -4 -12 -12z" fill="#2d5fae" stroke="#fff" stroke-width="1.2"/><path d="M1108.0 456.5 q6 2 12 -1 q6 3 12 1 v5 h-24z" fill="#d33"/><text x="1120.0" y="474.5" font-size="14" fill="#fff" text-anchor="middle" font-weight="bold">95</text><path d="M1072.0 698.5 h24 v9 c0 8 -12 12 -12 12 c0 0 -12 -4 -12 -12z" fill="#2d5fae" stroke="#fff" stroke-width="1.2"/><path d="M1072.0 694.5 q6 2 12 -1 q6 3 12 1 v5 h-24z" fill="#d33"/><text x="1084.0" y="712.5" font-size="14" fill="#fff" text-anchor="middle" font-weight="bold">95</text><path d="M806.7 740.5 Q806.7 736.0 810.7 736.0 Q814.4 738.5 822.0 736.0 Q829.6 738.5 833.3 736.0 Q837.3 736.0 837.3 740.5 L837.3 749.5 C837.3 755.5 825.0 756.0 822.0 759.0 C819.0 756.0 806.7 755.5 806.7 749.5 Z" fill="#fff" stroke="#444" stroke-width="1.4"/><text x="822.0" y="753.0" font-size="13.5" fill="#333" text-anchor="middle">441</text><rect x="837.2" y="764.5" width="31.5" height="18.5" rx="9" fill="#fff" stroke="#444" stroke-width="1.3"/><text x="853.0" y="780.0" font-size="13.5" fill="#333" text-anchor="middle">806</text><path d="M1062.0 857.5 h24 v9 c0 8 -12 12 -12 12 c0 0 -12 -4 -12 -12z" fill="#2d5fae" stroke="#fff" stroke-width="1.2"/><path d="M1062.0 853.5 q6 2 12 -1 q6 3 12 1 v5 h-24z" fill="#d33"/><text x="1074.0" y="871.5" font-size="14" fill="#fff" text-anchor="middle" font-weight="bold">95</text><path d="M1081.9 988.5 Q1081.9 984.0 1085.9 984.0 Q1088.0 986.5 1094.0 984.0 Q1100.0 986.5 1102.1 984.0 Q1106.1 984.0 1106.1 988.5 L1106.1 997.5 C1106.1 1003.5 1097.0 1004.0 1094.0 1007.0 C1091.0 1004.0 1081.9 1003.5 1081.9 997.5 Z" fill="#fff" stroke="#444" stroke-width="1.4"/><text x="1094.0" y="1001.0" font-size="13.5" fill="#333" text-anchor="middle">1</text><path d="M1001.0 1044.5 h24 v9 c0 8 -12 12 -12 12 c0 0 -12 -4 -12 -12z" fill="#2d5fae" stroke="#fff" stroke-width="1.2"/><path d="M1001.0 1040.5 q6 2 12 -1 q6 3 12 1 v5 h-24z" fill="#d33"/><text x="1013.0" y="1058.5" font-size="14" fill="#fff" text-anchor="middle" font-weight="bold">95</text><rect x="768.2" y="1061.5" width="31.5" height="18.5" rx="9" fill="#fff" stroke="#444" stroke-width="1.3"/><text x="784.0" y="1077.0" font-size="13.5" fill="#333" text-anchor="middle">827</text><rect x="921.2" y="1132.5" width="31.5" height="18.5" rx="9" fill="#fff" stroke="#444" stroke-width="1.3"/><text x="937.0" y="1148.0" font-size="13.5" fill="#333" text-anchor="middle">845</text><rect x="725.0" y="1139.5" width="24.0" height="18.5" rx="9" fill="#fff" stroke="#444" stroke-width="1.3"/><text x="737.0" y="1155.0" font-size="13.5" fill="#333" text-anchor="middle">86</text><path d="M812.7 1185.5 Q812.7 1181.0 816.7 1181.0 Q820.4 1183.5 828.0 1181.0 Q835.6 1183.5 839.3 1181.0 Q843.3 1181.0 843.3 1185.5 L843.3 1194.5 C843.3 1200.5 831.0 1201.0 828.0 1204.0 C825.0 1201.0 812.7 1200.5 812.7 1194.5 Z" fill="#fff" stroke="#444" stroke-width="1.4"/><text x="828.0" y="1198.0" font-size="13.5" fill="#333" text-anchor="middle">441</text><rect x="846.2" y="1205.5" width="31.5" height="18.5" rx="9" fill="#fff" stroke="#444" stroke-width="1.3"/><text x="862.0" y="1221.0" font-size="13.5" fill="#333" text-anchor="middle">834</text><rect x="925.2" y="1205.5" width="31.5" height="18.5" rx="9" fill="#fff" stroke="#444" stroke-width="1.3"/><text x="941.0" y="1221.0" font-size="13.5" fill="#333" text-anchor="middle">834</text><path d="M974.0 1228.5 h24 v9 c0 8 -12 12 -12 12 c0 0 -12 -4 -12 -12z" fill="#2d5fae" stroke="#fff" stroke-width="1.2"/><path d="M974.0 1224.5 q6 2 12 -1 q6 3 12 1 v5 h-24z" fill="#d33"/><text x="986.0" y="1242.5" font-size="14" fill="#fff" text-anchor="middle" font-weight="bold">95</text><path d="M157.3 1185.5 Q157.3 1181.0 161.3 1181.0 Q164.2 1183.5 171.0 1181.0 Q177.8 1183.5 180.7 1181.0 Q184.7 1181.0 184.7 1185.5 L184.7 1194.5 C184.7 1200.5 174.0 1201.0 171.0 1204.0 C168.0 1201.0 157.3 1200.5 157.3 1194.5 Z" fill="#fff" stroke="#444" stroke-width="1.4"/><text x="171.0" y="1198.0" font-size="13.5" fill="#333" text-anchor="middle">27</text><rect x="601.2" y="1277.5" width="31.5" height="18.5" rx="9" fill="#fff" stroke="#444" stroke-width="1.3"/><text x="617.0" y="1293.0" font-size="13.5" fill="#333" text-anchor="middle">869</text><path d="M855.0 436.5 L848.8 416.7 A14.5 14.5 0 1 1 861.2 416.7 Z" fill="#f0521f" stroke="#1a1a1a" stroke-width="2" stroke-linejoin="round"/><polygon points="855.0,393.5 857.7,399.3 864.0,400.1 859.4,404.4 860.6,410.7 855.0,407.6 849.4,410.7 850.6,404.4 846.0,400.1 852.3,399.3" fill="#fff" stroke="#fff" stroke-width="1.8" stroke-linejoin="round"/><path d="M924.5 436.5 L918.3 416.7 A14.5 14.5 0 1 1 930.7 416.7 Z" fill="#f0521f" stroke="#1a1a1a" stroke-width="2" stroke-linejoin="round"/><polygon points="924.5,393.5 927.2,399.3 933.5,400.1 928.9,404.4 930.1,410.7 924.5,407.6 918.9,410.7 920.1,404.4 915.5,400.1 921.8,399.3" fill="#fff" stroke="#fff" stroke-width="1.8" stroke-linejoin="round"/><path d="M976.5 365.5 L970.3 345.7 A14.5 14.5 0 1 1 982.7 345.7 Z" fill="#f36c5f" stroke="#1a1a1a" stroke-width="2" stroke-linejoin="round"/><text x="976.5" y="338.3" font-size="16" font-weight="bold" fill="#111" text-anchor="middle">3</text><path d="M999.0 399.5 L992.8 379.7 A14.5 14.5 0 1 1 1005.2 379.7 Z" fill="#f36c5f" stroke="#1a1a1a" stroke-width="2" stroke-linejoin="round"/><text x="999.0" y="372.3" font-size="16" font-weight="bold" fill="#111" text-anchor="middle">2</text><path d="M1019.0 441.5 L1012.8 421.7 A14.5 14.5 0 1 1 1025.2 421.7 Z" fill="#f36c5f" stroke="#1a1a1a" stroke-width="2" stroke-linejoin="round"/><text x="1019.0" y="414.3" font-size="16" font-weight="bold" fill="#111" text-anchor="middle">1</text><path d="M855.0 526.5 L848.8 506.7 A14.5 14.5 0 1 1 861.2 506.7 Z" fill="#f36c5f" stroke="#1a1a1a" stroke-width="2" stroke-linejoin="round"/><text x="855.0" y="499.3" font-size="16" font-weight="bold" fill="#111" text-anchor="middle">6</text><path d="M1167.5 587.5 L1161.3 567.7 A14.5 14.5 0 1 1 1173.7 567.7 Z" fill="#f0521f" stroke="#1a1a1a" stroke-width="2" stroke-linejoin="round"/><polygon points="1167.5,544.5 1170.2,550.3 1176.5,551.1 1171.9,555.4 1173.1,561.7 1167.5,558.6 1161.9,561.7 1163.1,555.4 1158.5,551.1 1164.8,550.3" fill="#fff" stroke="#fff" stroke-width="1.8" stroke-linejoin="round"/><path d="M1056.0 963.5 L1049.8 943.7 A14.5 14.5 0 1 1 1062.2 943.7 Z" fill="#f0521f" stroke="#1a1a1a" stroke-width="2" stroke-linejoin="round"/><polygon points="1056.0,920.5 1058.7,926.3 1065.0,927.1 1060.4,931.4 1061.6,937.7 1056.0,934.6 1050.4,937.7 1051.6,931.4 1047.0,927.1 1053.3,926.3" fill="#fff" stroke="#fff" stroke-width="1.8" stroke-linejoin="round"/><path d="M856.8 1150.5 L850.6 1130.7 A14.5 14.5 0 1 1 863.0 1130.7 Z" fill="#f0521f" stroke="#1a1a1a" stroke-width="2" stroke-linejoin="round"/><polygon points="856.8,1107.5 859.5,1113.3 865.8,1114.1 861.2,1118.4 862.4,1124.7 856.8,1121.6 851.2,1124.7 852.4,1118.4 847.8,1114.1 854.1,1113.3" fill="#fff" stroke="#fff" stroke-width="1.8" stroke-linejoin="round"/><path d="M944.0 587.5 L937.8 567.7 A14.5 14.5 0 1 1 950.2 567.7 Z" fill="#8a0b0b" stroke="#1a1a1a" stroke-width="2" stroke-linejoin="round"/><text x="944.0" y="560.3" font-size="16" font-weight="bold" fill="#fff" text-anchor="middle">3</text><path d="M946.0 628.5 L939.8 608.7 A14.5 14.5 0 1 1 952.2 608.7 Z" fill="#8a0b0b" stroke="#1a1a1a" stroke-width="2" stroke-linejoin="round"/><text x="946.0" y="601.3" font-size="16" font-weight="bold" fill="#fff" text-anchor="middle">2</text><path d="M951.0 672.5 L944.8 652.7 A14.5 14.5 0 1 1 957.2 652.7 Z" fill="#8a0b0b" stroke="#1a1a1a" stroke-width="2" stroke-linejoin="round"/><text x="951.0" y="645.3" font-size="16" font-weight="bold" fill="#fff" text-anchor="middle">1</text><path d="M882.0 659.5 L875.8 639.7 A14.5 14.5 0 1 1 888.2 639.7 Z" fill="#8a0b0b" stroke="#1a1a1a" stroke-width="2" stroke-linejoin="round"/><text x="882.0" y="632.3" font-size="16" font-weight="bold" fill="#fff" text-anchor="middle">4</text><path d="M857.6 766.5 L851.4 746.7 A14.5 14.5 0 1 1 863.8 746.7 Z" fill="#8a0b0b" stroke="#1a1a1a" stroke-width="2" stroke-linejoin="round"/><text x="857.6" y="739.3" font-size="16" font-weight="bold" fill="#fff" text-anchor="middle">5</text><path d="M944.0 770.5 L937.8 750.7 A14.5 14.5 0 1 1 950.2 750.7 Z" fill="#8a0b0b" stroke="#1a1a1a" stroke-width="2" stroke-linejoin="round"/><text x="944.0" y="743.3" font-size="16" font-weight="bold" fill="#fff" text-anchor="middle">6</text><path d="M1166.6 452.5 L1160.4 432.7 A14.5 14.5 0 1 1 1172.8 432.7 Z" fill="#30cc30" stroke="#1a1a1a" stroke-width="2" stroke-linejoin="round"/><text x="1166.6" y="425.3" font-size="16" font-weight="bold" fill="#111" text-anchor="middle">2</text><path d="M1148.0 456.5 L1141.8 436.7 A14.5 14.5 0 1 1 1154.2 436.7 Z" fill="#30cc30" stroke="#1a1a1a" stroke-width="2" stroke-linejoin="round"/><text x="1148.0" y="429.3" font-size="16" font-weight="bold" fill="#111" text-anchor="middle">1</text><path d="M1182.0 505.5 L1175.8 485.7 A14.5 14.5 0 1 1 1188.2 485.7 Z" fill="#30cc30" stroke="#1a1a1a" stroke-width="2" stroke-linejoin="round"/><text x="1182.0" y="478.3" font-size="16" font-weight="bold" fill="#111" text-anchor="middle">3</text><path d="M1101.0 621.5 L1094.8 601.7 A14.5 14.5 0 1 1 1107.2 601.7 Z" fill="#30cc30" stroke="#1a1a1a" stroke-width="2" stroke-linejoin="round"/><text x="1101.0" y="594.3" font-size="16" font-weight="bold" fill="#111" text-anchor="middle">6</text><path d="M1135.0 625.5 L1128.8 605.7 A14.5 14.5 0 1 1 1141.2 605.7 Z" fill="#30cc30" stroke="#1a1a1a" stroke-width="2" stroke-linejoin="round"/><text x="1135.0" y="598.3" font-size="16" font-weight="bold" fill="#111" text-anchor="middle">5</text><path d="M1019.0 810.5 L1012.8 790.7 A14.5 14.5 0 1 1 1025.2 790.7 Z" fill="#f7f200" stroke="#1a1a1a" stroke-width="2" stroke-linejoin="round"/><text x="1019.0" y="783.3" font-size="16" font-weight="bold" fill="#111" text-anchor="middle">1</text><path d="M1052.0 806.5 L1045.8 786.7 A14.5 14.5 0 1 1 1058.2 786.7 Z" fill="#f7f200" stroke="#1a1a1a" stroke-width="2" stroke-linejoin="round"/><text x="1052.0" y="779.3" font-size="16" font-weight="bold" fill="#111" text-anchor="middle">2</text><path d="M1118.0 810.5 L1111.8 790.7 A14.5 14.5 0 1 1 1124.2 790.7 Z" fill="#f7f200" stroke="#1a1a1a" stroke-width="2" stroke-linejoin="round"/><text x="1118.0" y="783.3" font-size="16" font-weight="bold" fill="#111" text-anchor="middle">3</text><path d="M1110.0 863.5 L1103.8 843.7 A14.5 14.5 0 1 1 1116.2 843.7 Z" fill="#f7f200" stroke="#1a1a1a" stroke-width="2" stroke-linejoin="round"/><text x="1110.0" y="836.3" font-size="16" font-weight="bold" fill="#111" text-anchor="middle">4</text><path d="M1019.0 922.5 L1012.8 902.7 A14.5 14.5 0 1 1 1025.2 902.7 Z" fill="#f7f200" stroke="#1a1a1a" stroke-width="2" stroke-linejoin="round"/><text x="1019.0" y="895.3" font-size="16" font-weight="bold" fill="#111" text-anchor="middle">6</text><path d="M1095.0 921.5 L1088.8 901.7 A14.5 14.5 0 1 1 1101.2 901.7 Z" fill="#f7f200" stroke="#1a1a1a" stroke-width="2" stroke-linejoin="round"/><text x="1095.0" y="894.3" font-size="16" font-weight="bold" fill="#111" text-anchor="middle">5</text><path d="M726.0 1003.5 L719.8 983.7 A14.5 14.5 0 1 1 732.2 983.7 Z" fill="#f20c0c" stroke="#1a1a1a" stroke-width="2" stroke-linejoin="round"/><text x="726.0" y="976.3" font-size="16" font-weight="bold" fill="#fff" text-anchor="middle">5</text><path d="M784.6 986.5 L778.4 966.7 A14.5 14.5 0 1 1 790.8 966.7 Z" fill="#f20c0c" stroke="#1a1a1a" stroke-width="2" stroke-linejoin="round"/><text x="784.6" y="959.3" font-size="16" font-weight="bold" fill="#fff" text-anchor="middle">4</text><path d="M817.0 980.5 L810.8 960.7 A14.5 14.5 0 1 1 823.2 960.7 Z" fill="#f20c0c" stroke="#1a1a1a" stroke-width="2" stroke-linejoin="round"/><text x="817.0" y="953.3" font-size="16" font-weight="bold" fill="#fff" text-anchor="middle">3</text><path d="M848.0 1034.0 L841.8 1014.2 A14.5 14.5 0 1 1 854.2 1014.2 Z" fill="#f20c0c" stroke="#1a1a1a" stroke-width="2" stroke-linejoin="round"/><text x="848.0" y="1006.8" font-size="16" font-weight="bold" fill="#fff" text-anchor="middle">2</text><path d="M823.0 1046.5 L816.8 1026.7 A14.5 14.5 0 1 1 829.2 1026.7 Z" fill="#f20c0c" stroke="#1a1a1a" stroke-width="2" stroke-linejoin="round"/><text x="823.0" y="1019.3" font-size="16" font-weight="bold" fill="#fff" text-anchor="middle">1</text><path d="M787.0 1061.5 L780.8 1041.7 A14.5 14.5 0 1 1 793.2 1041.7 Z" fill="#f20c0c" stroke="#1a1a1a" stroke-width="2" stroke-linejoin="round"/><text x="787.0" y="1034.3" font-size="16" font-weight="bold" fill="#fff" text-anchor="middle">6</text><path d="M1080.0 1109.5 L1073.8 1089.7 A14.5 14.5 0 1 1 1086.2 1089.7 Z" fill="#1fe3ef" stroke="#1a1a1a" stroke-width="2" stroke-linejoin="round"/><text x="1080.0" y="1082.3" font-size="16" font-weight="bold" fill="#111" text-anchor="middle">1</text><path d="M1105.5 1127.5 L1099.3 1107.7 A14.5 14.5 0 1 1 1111.7 1107.7 Z" fill="#1fe3ef" stroke="#1a1a1a" stroke-width="2" stroke-linejoin="round"/><text x="1105.5" y="1100.3" font-size="16" font-weight="bold" fill="#111" text-anchor="middle">2</text><path d="M986.7 1135.0 L980.5 1115.2 A14.5 14.5 0 1 1 992.9 1115.2 Z" fill="#1fe3ef" stroke="#1a1a1a" stroke-width="2" stroke-linejoin="round"/><text x="986.7" y="1107.8" font-size="16" font-weight="bold" fill="#111" text-anchor="middle">3</text><path d="M1098.7 1178.5 L1092.5 1158.7 A14.5 14.5 0 1 1 1104.9 1158.7 Z" fill="#1fe3ef" stroke="#1a1a1a" stroke-width="2" stroke-linejoin="round"/><text x="1098.7" y="1151.3" font-size="16" font-weight="bold" fill="#111" text-anchor="middle">4</text><path d="M968.0 1250.5 L961.8 1230.7 A14.5 14.5 0 1 1 974.2 1230.7 Z" fill="#1fe3ef" stroke="#1a1a1a" stroke-width="2" stroke-linejoin="round"/><text x="968.0" y="1223.3" font-size="16" font-weight="bold" fill="#111" text-anchor="middle">6</text><path d="M1094.5 1250.5 L1088.3 1230.7 A14.5 14.5 0 1 1 1100.7 1230.7 Z" fill="#1fe3ef" stroke="#1a1a1a" stroke-width="2" stroke-linejoin="round"/><text x="1094.5" y="1223.3" font-size="16" font-weight="bold" fill="#111" text-anchor="middle">5</text><path d="M753.0 1186.0 L746.8 1166.2 A14.5 14.5 0 1 1 759.2 1166.2 Z" fill="#1d7c1d" stroke="#1a1a1a" stroke-width="2" stroke-linejoin="round"/><text x="753.0" y="1158.8" font-size="16" font-weight="bold" fill="#fff" text-anchor="middle">1</text></svg>
<div class="b" style="left:48.0px;top:1013.5px;width:255.0px;height:60.5px;background:#fff;border-radius:3px;box-shadow:0 1px 4px rgba(0,0,0,.3)"></div>
<div class="b" style="left:152.0px;top:1017.0px;width:2.0px;height:54.0px;background:#ebebeb"></div>
<div class="t " style="left:75.0px;top:1031.0px;font-size:26px;line-height:26px;color:#000;font-weight:bold;">Map</div>
<div class="t " style="left:180.0px;top:1030.1px;font-size:27px;line-height:27px;color:#555;font-weight:normal;">Satellite</div>
<div class="b" style="left:1746.0px;top:1013.0px;width:60.5px;height:60.8px;background:#fff;border-radius:3px;box-shadow:0 1px 4px rgba(0,0,0,.3)"></div>
<svg style="position:absolute;left:1763px;top:1030px" width="27" height="27"><path d="M1.5 9V1.5H10 M17 1.5H25.5V9 M25.5 18V25.5H17 M10 25.5H1.5V18" fill="none" stroke="#555" stroke-width="3"/></svg>
<div class="b" style="left:1746.0px;top:2053.0px;width:60.5px;height:60.0px;background:#fff;border-radius:3px;box-shadow:0 1px 4px rgba(0,0,0,.3)"></div>
<svg style="position:absolute;left:1762px;top:2058px" width="30" height="50" viewBox="0 0 30 50"><circle cx="15" cy="9" r="7" fill="#f3a824"/><path d="M7 19 C7 16 10 15 15 15 C20 15 23 16 23 19 L24 33 L20 33 L20 46 L16 46 L15 36 L14 46 L10 46 L10 33 L6 33Z" fill="#f3a824"/><path d="M12 16 L15 21 L18 16Z" fill="#e2574c"/></svg>
<div class="b" style="left:1746.0px;top:2162.0px;width:60.5px;height:122.0px;background:#fff;border-radius:3px;box-shadow:0 1px 4px rgba(0,0,0,.3)"></div>
<div class="b" style="left:1754.0px;top:2223.0px;width:44.0px;height:1.5px;background:#e6e6e6"></div>
<svg style="position:absolute;left:1762px;top:2178px" width="28" height="90"><path d="M14 2V26 M2 14H26" stroke="#666" stroke-width="4.5"/><path d="M2 71H26" stroke="#666" stroke-width="4.5"/></svg>
<div class="t" style="left:49px;top:2285px;font-size:26px;line-height:26px;color:#4285f4;font-weight:normal;text-shadow:0 0 2px #fff,0 0 1px #fff">G<span style="color:#ea4335">o</span><span style="color:#fbbc05">o</span>g<span style="color:#34a853">l</span><span style="color:#ea4335">e</span></div>
<div class="b" style="left:1821.5px;top:997.5px;width:14.0px;height:1306.5px;background:#efefef"></div>
<div class="b" style="left:1835.5px;top:997.5px;width:1.0px;height:1306.5px;background:#d0d0d0"></div>
<div class="b" style="left:1822.0px;top:1624.0px;width:13.5px;height:69.0px;background:#c8c8c8"></div>
<div class="b" style="left:1838.0px;top:997.5px;width:1002.0px;height:1306.5px;background:#fcfcfc"></div>
<div class="b" style="left:2839.0px;top:997.5px;width:1.5px;height:1306.5px;background:#d6d6d6"></div>
<div class="b" style="left:1838.0px;top:997.5px;width:1000.0px;height:62.0px;background:#cbcbcb"></div>
<div class="b" style="left:1853.3px;top:1006.0px;width:416.7px;height:44.7px;background:#fcfcfc;border:1.5px solid #888;border-radius:3px"></div>
<div class="t " style="left:1875.0px;top:1021.1px;font-size:17.6px;line-height:17.6px;color:#111;font-weight:normal;">Waiting for Dispatch</div>
<svg style="position:absolute;left:2249px;top:1022px" width="18" height="12"><path d="M1.5 1.5L9 9.5L16.5 1.5" fill="none" stroke="#222" stroke-width="2.4"/></svg>
<div class="b" style="left:1838.0px;top:1059.5px;width:1000.0px;height:43.0px;background:#fbfbfb"></div>
<div class="b" style="left:1838.0px;top:1102.0px;width:1000.0px;height:2.0px;background:#dedede"></div>
<div class="b" style="left:1896.8px;top:1059.5px;width:1.2px;height:43.0px;background:#dcdcdc"></div>
<div class="b" style="left:1957.0px;top:1059.5px;width:1.2px;height:43.0px;background:#dcdcdc"></div>
<div class="b" style="left:2722.8px;top:1059.5px;width:1.2px;height:43.0px;background:#dcdcdc"></div>
<div class="b" style="left:1854.0px;top:1068.6px;width:19.6px;height:19.1px;border:2px solid #666;border-radius:4px;background:#fff"></div>
<div class="t " style="left:1972.5px;top:1070.8px;font-size:18px;line-height:18px;color:#444;font-weight:normal;">Work Order</div>
<div class="t " style="left:2738.5px;top:1070.8px;font-size:18px;line-height:18px;color:#444;font-weight:normal;">Actions</div>
<div class="b" style="left:1838.0px;top:1176.2px;width:1000.0px;height:2.0px;background:#e2e2e2"></div>
<div class="b" style="left:1846.3px;top:1128.5px;width:18.0px;height:18.0px;border:2px solid #777;border-radius:4px;background:#fff"></div>
<svg style="position:absolute;left:1913px;top:1121.0px" width="35" height="33" viewBox="0 0 35 33"><polygon points="0.6,5.5 11,5.5 16.8,0.3 22.6,5.5 33.3,5.5 33.3,8.3 0.6,8.3" fill="#939393"/><rect x="0.6" y="14.1" width="32.7" height="2.6" fill="#939393"/><polygon points="0.6,22.5 33.3,22.5 33.3,25.2 22.3,25.2 16.8,31.2 11.4,25.2 0.6,25.2" fill="#a5a5a5"/></svg>
<div class="t " style="left:1963.0px;top:1109.8px;font-size:18.5px;line-height:18.5px;color:#111;font-weight:normal;letter-spacing:0.95px"><span style="text-decoration:underline;text-underline-offset:2px;color:#444">29365830</span> - Service</div>
<div class="t " style="left:1963.0px;top:1132.1px;font-size:18.5px;line-height:18.5px;color:#111;font-weight:normal;letter-spacing:0.95px">Customer04</div>
<div class="t " style="left:1963.0px;top:1154.3px;font-size:18.5px;line-height:18.5px;color:#111;font-weight:normal;letter-spacing:0.95px">Not Assigned - Not Scheduled</div>
<svg style="position:absolute;left:2744px;top:1124.0px" width="28" height="32" viewBox="0 0 28 32"><path d="M4.5 1.8 H15.8 L24.6 10.6 V27.5 Q24.6 30.2 21.9 30.2 H4.5 Q1.8 30.2 1.8 27.5 V4.5 Q1.8 1.8 4.5 1.8Z" fill="#fcfcfc" stroke="#7a7a7a" stroke-width="2.2" stroke-linejoin="round"/><path d="M15.8 2.2 Q13.2 9.8 24.2 10.4" fill="none" stroke="#7a7a7a" stroke-width="2"/></svg>
<svg style="position:absolute;left:2810px;top:1124.0px" width="12" height="32"><circle cx="5.7" cy="5.9" r="3.3" fill="#777"/><circle cx="5.7" cy="16.1" r="3.3" fill="#777"/><circle cx="5.7" cy="26.3" r="3.3" fill="#777"/></svg>
<div class="b" style="left:1838.0px;top:1250.4px;width:1000.0px;height:2.0px;background:#e2e2e2"></div>
<div class="b" style="left:1846.3px;top:1202.7px;width:18.0px;height:18.0px;border:2px solid #777;border-radius:4px;background:#fff"></div>
<svg style="position:absolute;left:1913px;top:1195.2px" width="35" height="33" viewBox="0 0 35 33"><polygon points="0.6,5.5 11,5.5 16.8,0.3 22.6,5.5 33.3,5.5 33.3,8.3 0.6,8.3" fill="#939393"/><rect x="0.6" y="14.1" width="32.7" height="2.6" fill="#939393"/><polygon points="0.6,22.5 33.3,22.5 33.3,25.2 22.3,25.2 16.8,31.2 11.4,25.2 0.6,25.2" fill="#a5a5a5"/></svg>
<div class="t " style="left:1963.0px;top:1184.0px;font-size:18.5px;line-height:18.5px;color:#111;font-weight:normal;letter-spacing:0.95px"><span style="text-decoration:underline;text-underline-offset:2px;color:#444">29365832</span> - Service</div>
<div class="t " style="left:1963.0px;top:1206.3px;font-size:18.5px;line-height:18.5px;color:#111;font-weight:normal;letter-spacing:0.95px">Customer11</div>
<div class="t " style="left:1963.0px;top:1228.5px;font-size:18.5px;line-height:18.5px;color:#111;font-weight:normal;letter-spacing:0.95px">Not Assigned - Not Scheduled</div>
<svg style="position:absolute;left:2744px;top:1198.2px" width="28" height="32" viewBox="0 0 28 32"><path d="M4.5 1.8 H15.8 L24.6 10.6 V27.5 Q24.6 30.2 21.9 30.2 H4.5 Q1.8 30.2 1.8 27.5 V4.5 Q1.8 1.8 4.5 1.8Z" fill="#fcfcfc" stroke="#7a7a7a" stroke-width="2.2" stroke-linejoin="round"/><path d="M15.8 2.2 Q13.2 9.8 24.2 10.4" fill="none" stroke="#7a7a7a" stroke-width="2"/></svg>
<svg style="position:absolute;left:2810px;top:1198.2px" width="12" height="32"><circle cx="5.7" cy="5.9" r="3.3" fill="#777"/><circle cx="5.7" cy="16.1" r="3.3" fill="#777"/><circle cx="5.7" cy="26.3" r="3.3" fill="#777"/></svg>
<div class="b" style="left:1838.0px;top:1324.6px;width:1000.0px;height:2.0px;background:#e2e2e2"></div>
<div class="b" style="left:1846.3px;top:1276.9px;width:18.0px;height:18.0px;border:2px solid #777;border-radius:4px;background:#fff"></div>
<svg style="position:absolute;left:1913px;top:1269.4px" width="35" height="33" viewBox="0 0 35 33"><polygon points="0.6,5.5 11,5.5 16.8,0.3 22.6,5.5 33.3,5.5 33.3,8.3 0.6,8.3" fill="#939393"/><rect x="0.6" y="14.1" width="32.7" height="2.6" fill="#939393"/><polygon points="0.6,22.5 33.3,22.5 33.3,25.2 22.3,25.2 16.8,31.2 11.4,25.2 0.6,25.2" fill="#a5a5a5"/></svg>
<div class="t " style="left:1963.0px;top:1258.2px;font-size:18.5px;line-height:18.5px;color:#111;font-weight:normal;letter-spacing:0.95px"><span style="text-decoration:underline;text-underline-offset:2px;color:#444">29365834</span> - Service</div>
<div class="t " style="left:1963.0px;top:1280.5px;font-size:18.5px;line-height:18.5px;color:#111;font-weight:normal;letter-spacing:0.95px">Customer19</div>
<div class="t " style="left:1963.0px;top:1302.7px;font-size:18.5px;line-height:18.5px;color:#111;font-weight:normal;letter-spacing:0.95px">Not Assigned - Not Scheduled</div>
<svg style="position:absolute;left:2744px;top:1272.4px" width="28" height="32" viewBox="0 0 28 32"><path d="M4.5 1.8 H15.8 L24.6 10.6 V27.5 Q24.6 30.2 21.9 30.2 H4.5 Q1.8 30.2 1.8 27.5 V4.5 Q1.8 1.8 4.5 1.8Z" fill="#fcfcfc" stroke="#7a7a7a" stroke-width="2.2" stroke-linejoin="round"/><path d="M15.8 2.2 Q13.2 9.8 24.2 10.4" fill="none" stroke="#7a7a7a" stroke-width="2"/></svg>
<svg style="position:absolute;left:2810px;top:1272.4px" width="12" height="32"><circle cx="5.7" cy="5.9" r="3.3" fill="#777"/><circle cx="5.7" cy="16.1" r="3.3" fill="#777"/><circle cx="5.7" cy="26.3" r="3.3" fill="#777"/></svg>
<div class="b" style="left:1838.0px;top:1398.8px;width:1000.0px;height:2.0px;background:#e2e2e2"></div>
<div class="b" style="left:1846.3px;top:1351.1px;width:18.0px;height:18.0px;border:2px solid #777;border-radius:4px;background:#fff"></div>
<svg style="position:absolute;left:1913px;top:1343.6px" width="35" height="33" viewBox="0 0 35 33"><polygon points="0.6,5.5 11,5.5 16.8,0.3 22.6,5.5 33.3,5.5 33.3,8.3 0.6,8.3" fill="#939393"/><rect x="0.6" y="14.1" width="32.7" height="2.6" fill="#939393"/><polygon points="0.6,22.5 33.3,22.5 33.3,25.2 22.3,25.2 16.8,31.2 11.4,25.2 0.6,25.2" fill="#a5a5a5"/></svg>
<div class="t " style="left:1963.0px;top:1332.4px;font-size:18.5px;line-height:18.5px;color:#111;font-weight:normal;letter-spacing:0.95px"><span style="text-decoration:underline;text-underline-offset:2px;color:#444">29365928</span> - Service</div>
<div class="t " style="left:1963.0px;top:1354.7px;font-size:18.5px;line-height:18.5px;color:#111;font-weight:normal;letter-spacing:0.95px">Customer14</div>
<div class="t " style="left:1963.0px;top:1376.9px;font-size:18.5px;line-height:18.5px;color:#111;font-weight:normal;letter-spacing:0.95px">Not Assigned - Not Scheduled</div>
<svg style="position:absolute;left:2744px;top:1346.6px" width="28" height="32" viewBox="0 0 28 32"><path d="M4.5 1.8 H15.8 L24.6 10.6 V27.5 Q24.6 30.2 21.9 30.2 H4.5 Q1.8 30.2 1.8 27.5 V4.5 Q1.8 1.8 4.5 1.8Z" fill="#fcfcfc" stroke="#7a7a7a" stroke-width="2.2" stroke-linejoin="round"/><path d="M15.8 2.2 Q13.2 9.8 24.2 10.4" fill="none" stroke="#7a7a7a" stroke-width="2"/></svg>
<svg style="position:absolute;left:2810px;top:1346.6px" width="12" height="32"><circle cx="5.7" cy="5.9" r="3.3" fill="#777"/><circle cx="5.7" cy="16.1" r="3.3" fill="#777"/><circle cx="5.7" cy="26.3" r="3.3" fill="#777"/></svg>
<div class="b" style="left:1838.0px;top:1473.0px;width:1000.0px;height:2.0px;background:#e2e2e2"></div>
<div class="b" style="left:1846.3px;top:1425.3px;width:18.0px;height:18.0px;border:2px solid #777;border-radius:4px;background:#fff"></div>
<svg style="position:absolute;left:1913px;top:1417.8px" width="35" height="33" viewBox="0 0 35 33"><polygon points="0.6,5.5 11,5.5 16.8,0.3 22.6,5.5 33.3,5.5 33.3,8.3 0.6,8.3" fill="#939393"/><rect x="0.6" y="14.1" width="32.7" height="2.6" fill="#939393"/><polygon points="0.6,22.5 33.3,22.5 33.3,25.2 22.3,25.2 16.8,31.2 11.4,25.2 0.6,25.2" fill="#a5a5a5"/></svg>
<div class="t " style="left:1963.0px;top:1406.6px;font-size:18.5px;line-height:18.5px;color:#111;font-weight:normal;letter-spacing:0.95px"><span style="text-decoration:underline;text-underline-offset:2px;color:#444">29365936</span> - Service</div>
<div class="t " style="left:1963.0px;top:1428.9px;font-size:18.5px;line-height:18.5px;color:#111;font-weight:normal;letter-spacing:0.95px">John Doe</div>
<div class="t " style="left:1963.0px;top:1451.1px;font-size:18.5px;line-height:18.5px;color:#111;font-weight:normal;letter-spacing:0.95px">Not Assigned - Not Scheduled</div>
<svg style="position:absolute;left:2744px;top:1420.8px" width="28" height="32" viewBox="0 0 28 32"><path d="M4.5 1.8 H15.8 L24.6 10.6 V27.5 Q24.6 30.2 21.9 30.2 H4.5 Q1.8 30.2 1.8 27.5 V4.5 Q1.8 1.8 4.5 1.8Z" fill="#fcfcfc" stroke="#7a7a7a" stroke-width="2.2" stroke-linejoin="round"/><path d="M15.8 2.2 Q13.2 9.8 24.2 10.4" fill="none" stroke="#7a7a7a" stroke-width="2"/></svg>
<svg style="position:absolute;left:2810px;top:1420.8px" width="12" height="32"><circle cx="5.7" cy="5.9" r="3.3" fill="#777"/><circle cx="5.7" cy="16.1" r="3.3" fill="#777"/><circle cx="5.7" cy="26.3" r="3.3" fill="#777"/></svg>
<div class="b" style="left:1838.0px;top:1547.2px;width:1000.0px;height:2.0px;background:#e2e2e2"></div>
<div class="b" style="left:1846.3px;top:1499.5px;width:18.0px;height:18.0px;border:2px solid #777;border-radius:4px;background:#fff"></div>
<svg style="position:absolute;left:1913px;top:1492.0px" width="35" height="33" viewBox="0 0 35 33"><polygon points="0.6,5.5 11,5.5 16.8,0.3 22.6,5.5 33.3,5.5 33.3,8.3 0.6,8.3" fill="#939393"/><rect x="0.6" y="14.1" width="32.7" height="2.6" fill="#939393"/><polygon points="0.6,22.5 33.3,22.5 33.3,25.2 22.3,25.2 16.8,31.2 11.4,25.2 0.6,25.2" fill="#a5a5a5"/></svg>
<div class="t " style="left:1963.0px;top:1480.8px;font-size:18.5px;line-height:18.5px;color:#111;font-weight:normal;letter-spacing:0.95px"><span style="text-decoration:underline;text-underline-offset:2px;color:#444">29365939</span> - Service</div>
<div class="t " style="left:1963.0px;top:1503.1px;font-size:18.5px;line-height:18.5px;color:#111;font-weight:normal;letter-spacing:0.95px">Customer37</div>
<div class="t " style="left:1963.0px;top:1525.3px;font-size:18.5px;line-height:18.5px;color:#111;font-weight:normal;letter-spacing:0.95px">Not Assigned - Not Scheduled</div>
<svg style="position:absolute;left:2744px;top:1495.0px" width="28" height="32" viewBox="0 0 28 32"><path d="M4.5 1.8 H15.8 L24.6 10.6 V27.5 Q24.6 30.2 21.9 30.2 H4.5 Q1.8 30.2 1.8 27.5 V4.5 Q1.8 1.8 4.5 1.8Z" fill="#fcfcfc" stroke="#7a7a7a" stroke-width="2.2" stroke-linejoin="round"/><path d="M15.8 2.2 Q13.2 9.8 24.2 10.4" fill="none" stroke="#7a7a7a" stroke-width="2"/></svg>
<svg style="position:absolute;left:2810px;top:1495.0px" width="12" height="32"><circle cx="5.7" cy="5.9" r="3.3" fill="#777"/><circle cx="5.7" cy="16.1" r="3.3" fill="#777"/><circle cx="5.7" cy="26.3" r="3.3" fill="#777"/></svg>
<div class="b" style="left:1838.0px;top:1621.4px;width:1000.0px;height:2.0px;background:#e2e2e2"></div>
<div class="b" style="left:1846.3px;top:1573.7px;width:18.0px;height:18.0px;border:2px solid #777;border-radius:4px;background:#fff"></div>
<svg style="position:absolute;left:1913px;top:1566.2px" width="35" height="33" viewBox="0 0 35 33"><polygon points="0.6,5.5 11,5.5 16.8,0.3 22.6,5.5 33.3,5.5 33.3,8.3 0.6,8.3" fill="#939393"/><rect x="0.6" y="14.1" width="32.7" height="2.6" fill="#939393"/><polygon points="0.6,22.5 33.3,22.5 33.3,25.2 22.3,25.2 16.8,31.2 11.4,25.2 0.6,25.2" fill="#a5a5a5"/></svg>
<div class="t " style="left:1963.0px;top:1555.0px;font-size:18.5px;line-height:18.5px;color:#111;font-weight:normal;letter-spacing:0.95px"><span style="text-decoration:underline;text-underline-offset:2px;color:#444">29346657</span> - Service</div>
<div class="t " style="left:1963.0px;top:1577.3px;font-size:18.5px;line-height:18.5px;color:#111;font-weight:normal;letter-spacing:0.95px">Customer24</div>
<div class="t " style="left:1963.0px;top:1599.5px;font-size:18.5px;line-height:18.5px;color:#111;font-weight:normal;letter-spacing:0.95px">Mobile User4 - 10/16/24 12:00 PM - 1:00 PM</div>
<svg style="position:absolute;left:2744px;top:1569.2px" width="28" height="32" viewBox="0 0 28 32"><path d="M4.5 1.8 H15.8 L24.6 10.6 V27.5 Q24.6 30.2 21.9 30.2 H4.5 Q1.8 30.2 1.8 27.5 V4.5 Q1.8 1.8 4.5 1.8Z" fill="#fcfcfc" stroke="#7a7a7a" stroke-width="2.2" stroke-linejoin="round"/><path d="M15.8 2.2 Q13.2 9.8 24.2 10.4" fill="none" stroke="#7a7a7a" stroke-width="2"/></svg>
<svg style="position:absolute;left:2810px;top:1569.2px" width="12" height="32"><circle cx="5.7" cy="5.9" r="3.3" fill="#777"/><circle cx="5.7" cy="16.1" r="3.3" fill="#777"/><circle cx="5.7" cy="26.3" r="3.3" fill="#777"/></svg>
<div class="t " style="left:1851.0px;top:1646.8px;font-size:18.5px;line-height:18.5px;color:#333;font-weight:normal;letter-spacing:0.95px">Showing 1 to 7 of 7 entries</div>
<div style="position:absolute;left:0;top:0;width:2875px;height:2304px;box-sizing:border-box;pointer-events:none;">
<div style="position:absolute;left:0;top:0;right:0;height:2px;background:repeating-linear-gradient(to right,#5f5f5f 0,#5f5f5f 8px,transparent 8px,transparent 15px)"></div>
<div style="position:absolute;left:0;bottom:0;right:0;height:2px;background:repeating-linear-gradient(to right,#5f5f5f 0,#5f5f5f 8px,transparent 8px,transparent 15px)"></div>
<div style="position:absolute;left:0;top:0;bottom:0;width:2px;background:repeating-linear-gradient(to bottom,#5f5f5f 0,#5f5f5f 8px,transparent 8px,transparent 15px)"></div>
<div style="position:absolute;right:0;top:0;bottom:0;width:2px;background:repeating-linear-gradient(to bottom,#5f5f5f 0,#5f5f5f 8px,transparent 8px,transparent 15px)"></div>
</div>
</body></html>
